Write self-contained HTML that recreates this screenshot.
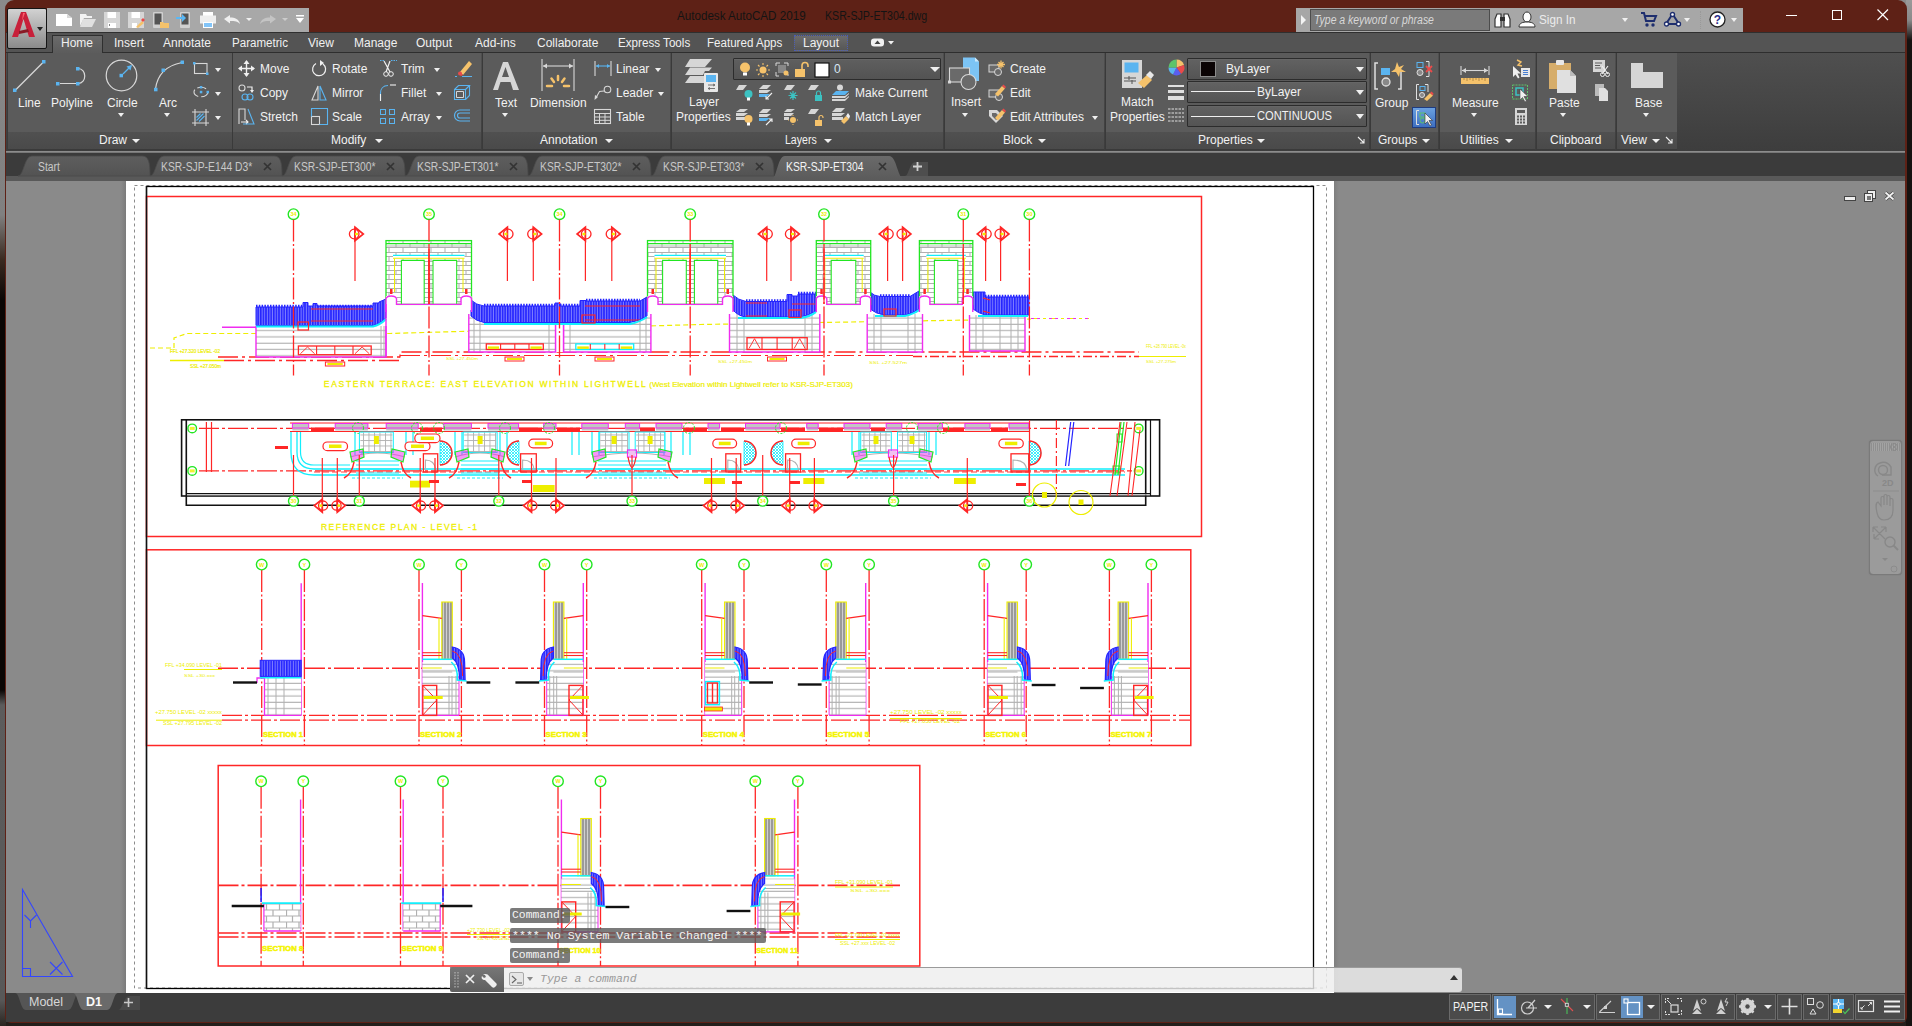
<!DOCTYPE html>
<html><head><meta charset="utf-8">
<style>
*{margin:0;padding:0;box-sizing:border-box}
html,body{width:1912px;height:1026px;overflow:hidden}
body{background:#241f1b;font-family:"Liberation Sans",sans-serif;position:relative}
.a{position:absolute}
svg{position:absolute;overflow:visible}
#desk{left:0;top:0;width:6px;height:1026px;background:linear-gradient(#8a8a8a 0px,#808080 215px,#3a2a20 260px,#0a0604 300px,#0a0604 690px,#5c5c5c 705px,#585858 1000px,#2a2520 1026px)}
#deskr{left:1906px;top:0;width:6px;height:1026px;background:linear-gradient(#9a9a9a 0px,#8a8a8a 20px,#161210 40px,#161210 1026px)}
#win{left:5px;top:0;width:1902px;height:1023px;background:#5e2116;border-radius:9px 9px 6px 6px}
#title{left:0;top:0;width:1912px;height:32px}
#tabrow{left:6px;top:32px;width:1899px;height:21px;background:#545454;border-top:1px solid #2f2f2f;border-bottom:1px solid #2e2e2e}
#ribbon{left:6px;top:53px;width:1899px;height:98px;background:linear-gradient(#4f4f4f,#3d3d3d)}
#ftabs{left:6px;top:152px;width:1899px;height:29px;background:#3b3b3b;border-top:1px solid #777}
#draw{left:6px;top:181px;width:1899px;height:812px;background:#8a8a8a;overflow:hidden}
#status{left:6px;top:993px;width:1899px;height:29px;background:#3c3c3c}
.t{color:#f2f2f2;font-size:12px;white-space:nowrap;position:absolute;line-height:14px}
.tab{color:#f0f0f0;font-size:12px;position:absolute;top:36px;line-height:14px;white-space:nowrap}
.pan{position:absolute;top:53px;height:97px;background:#5b5b5b;border-left:1px solid #3a3a3a;border-bottom:1px solid #3a3a3a}
.lbl{position:absolute;left:0;right:0;top:79px;height:17px;background:linear-gradient(#505050,#4a4a4a)}
.dd{position:absolute;width:0;height:0;border-left:4px solid transparent;border-right:4px solid transparent;border-top:4px solid #f0f0f0}
.ft{position:absolute;top:155px;height:22px;background:#575757;border-radius:9px 9px 0 0}
.ftt{position:absolute;top:160px;color:#c8c8c8;font-size:12px;line-height:14px;white-space:nowrap;transform-origin:0 0;transform:scaleX(.86)}
.fx{position:absolute;top:160px;color:#9a9a9a;font-size:12px;font-weight:bold;line-height:14px}
.cmb{position:absolute;background:#595959;border:1px solid #3a3a3a;border-radius:1px;box-shadow:inset 0 1px 0 #666}
.sg{position:absolute;top:994px;height:26px;background:#4b4b4b;border:1px solid #6a6a6a}
</style></head><body>
<div class="a" style="left:0;top:0;width:1912px;height:14px;background:#8a8a8a"></div><div class="a" id="desk"></div><div class="a" id="deskr"></div>
<div class="a" id="win"></div>
<!-- TITLE BAR -->
<div class="a" id="title" style="z-index:5">
  <!-- app button -->
  <div class="a" style="left:7px;top:8px;width:40px;height:41px;background:linear-gradient(#d2d2d2,#8a8a8a);border:1px solid #141414;border-radius:2px"></div>
  <svg style="left:11px;top:11px" width="30" height="28" viewBox="0 0 30 28">
    <path d="M1 26 L10 1 L15 1 L24 26 L18 26 L12.5 8 L7 26 Z" fill="#c8203a"/>
    <path d="M8 20 L17 18 L18 21 L8 23Z" fill="#8a1a26"/>
    <path d="M12 2 L14 2 L11 10Z" fill="#ff5a6a"/>
  </svg>
  <div class="dd" style="left:37px;top:27px;border-top-color:#222;border-left-width:3px;border-right-width:3px"></div>
  <!-- QAT -->
  <div class="a" style="left:47px;top:8px;width:262px;height:24px;background:#a8a8a8"></div>
  <svg style="left:56px;top:14px" width="17" height="13"><path d="M0 0H11L16 4V12H0Z" fill="#fff"/><path d="M11 0V4H16" fill="#d8d8d8"/></svg>
  <svg style="left:80px;top:14px" width="16" height="13"><path d="M0 0H6L7 2H12V4H4L0 12Z" fill="#f2f2f2"/><path d="M3 5H16L12 13H0Z" fill="#e0e0e0"/></svg>
  <svg style="left:104px;top:12px" width="16" height="16"><rect width="16" height="16" fill="#d6d6d6"/><rect x="3.5" y="0" width="8.5" height="6" fill="#fff"/><rect x="4" y="11" width="8" height="5" fill="#fff"/><rect x="5" y="12" width="1" height="2" fill="#888"/></svg>
  <svg style="left:128px;top:12px" width="16" height="16"><rect width="16" height="16" fill="#d6d6d6"/><rect x="3.5" y="0" width="8.5" height="6" fill="#fff"/><rect x="4" y="11" width="5" height="5" fill="#fff"/><path d="M8 15L14 9L16 11L10 16Z" fill="#f5c26b"/><path d="M13 8L15 6L17 8L15 10Z" fill="#e94a4a"/></svg>
  <svg style="left:153px;top:12px" width="16" height="16"><rect x="0" y="0" width="10" height="16" rx="1" fill="#d0d0d0"/><rect x="1.5" y="1.5" width="7" height="11" fill="#555"/><path d="M7 10H10L11 11H16V16H7Z" fill="#f5c26b"/></svg>
  <svg style="left:176px;top:12px" width="16" height="16"><rect x="4" y="0" width="10" height="16" rx="1" fill="#d0d0d0"/><rect x="5.5" y="1.5" width="7" height="11" fill="#555"/><path d="M0 5H6V2L10 6L6 10V7H0Z" fill="#5ab8f5"/></svg>
  <svg style="left:200px;top:12px" width="16" height="16"><rect x="3" y="0" width="10" height="5" fill="#fff"/><rect x="0" y="3.5" width="16" height="8" fill="#eee"/><rect x="3" y="10" width="10" height="6" fill="#fff"/><rect x="4" y="11" width="8" height="4" fill="#82c4f8"/></svg>
  <svg style="left:224px;top:15px" width="17" height="10"><path d="M0 4L6 0V2.5C11 2.5 15 4 16 9C14 6.5 11 6 6 6V8.5Z" fill="#efefef"/></svg>
  <div class="dd" style="left:246px;top:18px;border-left-width:3px;border-right-width:3px;border-top-width:3px"></div>
  <svg style="left:260px;top:15px" width="17" height="10"><path d="M16 4L10 0V2.5C5 2.5 1 4 0 9C2 6.5 5 6 10 6V8.5Z" fill="#c4c4c4"/></svg>
  <div class="dd" style="left:282px;top:18px;border-left-width:3px;border-right-width:3px;border-top-width:3px;border-top-color:#ccc"></div>
  <svg style="left:296px;top:15px" width="9" height="9"><rect width="8" height="1.5" fill="#fff"/><path d="M0 3H8L4 8Z" fill="#fff"/></svg>
  <!-- title -->
  <div class="t" style="left:677px;top:9px;color:#141414;font-size:12.5px;transform-origin:0 0;transform:scaleX(.93)">Autodesk AutoCAD 2019</div>
  <div class="t" style="left:825px;top:9px;color:#141414;font-size:12.5px;transform-origin:0 0;transform:scaleX(.85)">KSR-SJP-ET304.dwg</div>
  <!-- search -->
  <div class="a" style="left:1296px;top:8px;width:447px;height:24px;background:#a7a7a7"></div>
  <svg style="left:1301px;top:15px" width="6" height="10"><path d="M0 0L5 5L0 10Z" fill="#f4f4f4"/></svg>
  <div class="a" style="left:1310px;top:9px;width:180px;height:22px;background:#7a7a7a;border:1px solid #4c4c4c"></div>
  <div class="t" style="left:1314px;top:13px;color:#d8d8d8;font-style:italic;transform-origin:0 0;transform:scaleX(.87)">Type a keyword or phrase</div>
  <svg style="left:1494px;top:12px" width="17" height="16"><path d="M1 7L3 2H7V15H1Z M10 2H14L16 7V15H10Z" fill="#fff" stroke="#333" stroke-width="1.2"/><rect x="6" y="5" width="5" height="4" fill="#333"/></svg>
  <svg style="left:1518px;top:11px" width="18" height="17"><ellipse cx="9" cy="6" rx="4" ry="5" fill="#fff" stroke="#333"/><path d="M1 16C1 12 5 11 9 11C13 11 17 12 17 16Z" fill="#fff" stroke="#333"/></svg>
  <div class="t" style="left:1539px;top:13px;color:#ececec;font-size:13px;transform-origin:0 0;transform:scaleX(.9)">Sign In</div>
  <div class="dd" style="left:1622px;top:18px;border-left-width:3.5px;border-right-width:3.5px"></div>
  <svg style="left:1640px;top:12px" width="17" height="15"><path d="M1 1H4L6 9H14L16 4H5" fill="none" stroke="#1e2e6e" stroke-width="2"/><circle cx="7" cy="13" r="1.7" fill="#1e2e6e"/><circle cx="13" cy="13" r="1.7" fill="#1e2e6e"/></svg>
  <svg style="left:1664px;top:12px" width="17" height="15"><path d="M8.5 2L15 12H2Z" fill="none" stroke="#1e2e6e" stroke-width="2"/><circle cx="8.5" cy="2.5" r="2" fill="#fff" stroke="#1e2e6e" stroke-width="1.4"/><circle cx="2.5" cy="12" r="2" fill="#fff" stroke="#1e2e6e" stroke-width="1.4"/><circle cx="14.5" cy="12" r="2" fill="#fff" stroke="#1e2e6e" stroke-width="1.4"/></svg>
  <div class="dd" style="left:1684px;top:18px;border-left-width:3.5px;border-right-width:3.5px"></div>
  <div class="a" style="left:1700px;top:11px;width:1px;height:18px;border-left:1px dotted #999"></div>
  <svg style="left:1709px;top:11px" width="17" height="17"><circle cx="8.5" cy="8.5" r="7.5" fill="#fff" stroke="#222" stroke-width="1.3"/><text x="8.5" y="13" text-anchor="middle" font-family="Liberation Sans" font-weight="bold" font-size="12" fill="#2a2e8a">?</text></svg>
  <div class="dd" style="left:1731px;top:18px;border-left-width:3.5px;border-right-width:3.5px"></div>
  <!-- window controls -->
  <div class="a" style="left:1786px;top:15px;width:11px;height:1px;background:#fff"></div>
  <div class="a" style="left:1832px;top:10px;width:10px;height:10px;border:1px solid #fff"></div>
  <svg style="left:1877px;top:9px" width="12" height="12"><path d="M0.5 0.5L11 11M11 0.5L0.5 11" stroke="#fff" stroke-width="1.2"/></svg>
</div>
<!-- TAB ROW -->
<div class="a" id="tabrow"></div>
<div class="a" style="left:47px;top:32px;width:262px;height:1px;background:#2f2f2f"></div>
<div class="a" style="left:52px;top:35px;width:51px;height:19px;background:linear-gradient(#6a6a6a,#5b5b5b);border:1px solid #2f2f2f;border-bottom:none"></div>
<div class="tab" style="left:61px">Home</div>
<div class="tab" style="left:114px">Insert</div>
<div class="tab" style="left:163px">Annotate</div>
<div class="tab" style="left:232px;transform-origin:0 0;transform:scaleX(.965)">Parametric</div>
<div class="tab" style="left:308px">View</div>
<div class="tab" style="left:354px">Manage</div>
<div class="tab" style="left:416px">Output</div>
<div class="tab" style="left:475px">Add-ins</div>
<div class="tab" style="left:537px">Collaborate</div>
<div class="tab" style="left:618px;transform-origin:0 0;transform:scaleX(.97)">Express Tools</div>
<div class="tab" style="left:707px;transform-origin:0 0;transform:scaleX(.965)">Featured Apps</div>
<div class="a" style="left:794px;top:35px;width:54px;height:16px;border:1px dotted #4b5cb4;background:linear-gradient(#6c6c6c,#565656)"></div>
<div class="tab" style="left:803px">Layout</div>
<svg style="left:871px;top:38px" width="24" height="10"><rect x="0" y="0.5" width="13" height="8" rx="3" fill="#f0f0f0"/><path d="M3.5 6L6.5 2.5L9.5 6Z" fill="#444"/><path d="M17 3H23L20 6.5Z" fill="#f0f0f0"/></svg>
<!-- RIBBON -->
<div class="a" id="ribbon"></div>
<div class="a" style="left:6px;top:151px;width:1899px;height:1px;background:#8c8c8c"></div>
<!-- PANELS -->
<div class="pan" style="left:7px;width:225px"><div class="lbl"></div></div>
<div class="pan" style="left:232px;width:249px"><div class="lbl"></div></div>
<div class="pan" style="left:482px;width:188px"><div class="lbl"></div></div>
<div class="pan" style="left:671px;width:272px"><div class="lbl"></div></div>
<div class="pan" style="left:944px;width:160px"><div class="lbl"></div></div>
<div class="pan" style="left:1105px;width:264px"><div class="lbl"></div></div>
<div class="pan" style="left:1370px;width:68px"><div class="lbl"></div></div>
<div class="pan" style="left:1439px;width:96px"><div class="lbl"></div></div>
<div class="pan" style="left:1536px;width:79px"><div class="lbl"></div></div>
<div class="pan" style="left:1616px;width:61px"><div class="lbl"></div></div>
<!-- DRAW -->
<svg style="left:12px;top:59px" width="34" height="34"><path d="M3.5 31L31 3.5" stroke="#d8d8d8" stroke-width="1.2"/><rect x="1" y="29.5" width="3.5" height="3.5" fill="#5ab4f0"/><rect x="30" y="1" width="3.5" height="3.5" fill="#5ab4f0"/></svg>
<div class="t" style="left:18px;top:96px">Line</div>
<svg style="left:54px;top:65px" width="36" height="22"><path d="M6 18.5H22M24 3.5C33 3.5 33 18.5 24 18.5" fill="none" stroke="#d8d8d8" stroke-width="1.2"/><rect x="2" y="17" width="3.5" height="3.5" fill="#5ab4f0"/><rect x="22" y="17" width="3.5" height="3.5" fill="#5ab4f0"/><rect x="22" y="2" width="3.5" height="3.5" fill="#5ab4f0"/></svg>
<div class="t" style="left:51px;top:96px">Polyline</div>
<svg style="left:104px;top:58px" width="36" height="36"><circle cx="17.5" cy="17.5" r="15.3" fill="none" stroke="#d8d8d8" stroke-width="1.2"/><path d="M19 16L27 8" stroke="#5ab4f0" stroke-width="1.3"/><path d="M28 7L22.5 8.5L26.5 12.5Z" fill="#5ab4f0"/><rect x="15.5" y="15.8" width="3.5" height="3.5" fill="#5ab4f0"/></svg>
<div class="t" style="left:107px;top:96px">Circle</div>
<div class="dd" style="left:118px;top:113px;border-left-width:3.5px;border-right-width:3.5px"></div>
<svg style="left:152px;top:59px" width="34" height="34"><path d="M3.5 30C5 18 12 7 30 3.5" fill="none" stroke="#d8d8d8" stroke-width="1.2"/><rect x="2" y="28.8" width="3.5" height="3.5" fill="#5ab4f0"/><rect x="9.5" y="9.5" width="3.5" height="3.5" fill="#5ab4f0"/><rect x="28.5" y="1.5" width="3.5" height="3.5" fill="#5ab4f0"/></svg>
<div class="t" style="left:159px;top:96px">Arc</div>
<div class="dd" style="left:164px;top:113px;border-left-width:3.5px;border-right-width:3.5px"></div>
<svg style="left:193px;top:62px" width="16" height="14"><rect x="1.5" y="1.5" width="12.5" height="10" fill="none" stroke="#d8d8d8" stroke-width="1.1"/><rect x="0" y="0" width="2.5" height="2.5" fill="#5ab4f0"/><rect x="13" y="10.5" width="2.5" height="2.5" fill="#5ab4f0"/></svg>
<div class="dd" style="left:215px;top:68px;border-left-width:3.5px;border-right-width:3.5px"></div>
<svg style="left:193px;top:86px" width="16" height="12"><ellipse cx="8" cy="6" rx="7" ry="4.8" fill="none" stroke="#d8d8d8" stroke-width="1.1" stroke-dasharray="9 3"/><rect x="6.8" y="4.8" width="2.5" height="2.5" fill="#5ab4f0"/><rect x="6.8" y="0" width="2.5" height="2.5" fill="#5ab4f0"/><rect x="13.5" y="4.8" width="2.5" height="2.5" fill="#5ab4f0"/></svg>
<div class="dd" style="left:215px;top:92px;border-left-width:3.5px;border-right-width:3.5px"></div>
<svg style="left:192px;top:109px" width="18" height="17"><path d="M0 3H17M0 14H17M3 0V17M14 0V17" stroke="#d8d8d8" stroke-width="1.1"/><path d="M4.5 11.5L11.5 4.5M7 12.5L12.5 7M4.5 8.5L8.5 4.5" stroke="#5ab4f0" stroke-width="1.1"/></svg>
<div class="dd" style="left:215px;top:116px;border-left-width:3.5px;border-right-width:3.5px"></div>
<div class="t" style="left:99px;top:133px">Draw</div>
<div class="dd" style="left:132px;top:139px"></div>
<!-- MODIFY -->
<svg style="left:238px;top:60px" width="17" height="17"><path d="M8.5 1V16M1 8.5H16" stroke="#f0f0f0" stroke-width="1.4"/><path d="M8.5 0L5.5 4H11.5ZM8.5 17L5.5 13H11.5ZM0 8.5L4 5.5V11.5ZM17 8.5L13 5.5V11.5Z" fill="#f0f0f0"/></svg>
<div class="t" style="left:260px;top:62px">Move</div>
<svg style="left:238px;top:84px" width="17" height="17"><circle cx="4" cy="4" r="3" fill="none" stroke="#d8d8d8" stroke-width="1.1"/><path d="M9 3H14V7" fill="none" stroke="#f0f0f0" stroke-width="1.2"/><path d="M12 6H16L14 9Z" fill="#f0f0f0"/><circle cx="7" cy="13" r="3" fill="none" stroke="#5ab4f0" stroke-width="1.1"/><circle cx="12" cy="13" r="3" fill="none" stroke="#5ab4f0" stroke-width="1.1"/></svg>
<div class="t" style="left:260px;top:86px">Copy</div>
<svg style="left:238px;top:108px" width="17" height="17"><path d="M1 16V1H7V12" fill="none" stroke="#d8d8d8" stroke-width="1.1"/><path d="M3 14H10M8 12L10 14L8 16" fill="none" stroke="#f0f0f0" stroke-width="1.1"/><path d="M10 1L16 16H5" fill="none" stroke="#5ab4f0" stroke-width="1.1"/></svg>
<div class="t" style="left:260px;top:110px">Stretch</div>
<svg style="left:311px;top:60px" width="16" height="17"><path d="M12 4A6.5 6.5 0 1 1 5 3.5" fill="none" stroke="#f0f0f0" stroke-width="1.2"/><path d="M9 0L13 3L9 6Z" fill="#f0f0f0"/></svg>
<div class="t" style="left:332px;top:62px">Rotate</div>
<svg style="left:311px;top:85px" width="16" height="16"><path d="M7 1L1 15H7Z" fill="none" stroke="#d8d8d8" stroke-width="1.1"/><path d="M9 1L15 15H9Z" fill="none" stroke="#5ab4f0" stroke-width="1.1"/></svg>
<div class="t" style="left:332px;top:86px">Mirror</div>
<svg style="left:311px;top:108px" width="17" height="17"><rect x="0.5" y="8.5" width="8" height="8" fill="none" stroke="#d8d8d8" stroke-width="1.1"/><path d="M0.5 8.5V0.5H16.5V16.5H8.5" fill="none" stroke="#5ab4f0" stroke-width="1.1"/></svg>
<div class="t" style="left:332px;top:110px">Scale</div>
<svg style="left:380px;top:60px" width="17" height="17"><path d="M0 0.5H5M11 0.5H17" stroke="#5ab4f0" stroke-width="1" stroke-dasharray="1.5 1"/><path d="M4 1L10 12M10 1L6 12" stroke="#f0f0f0" stroke-width="1.2"/><circle cx="6" cy="14" r="2.3" fill="none" stroke="#f0f0f0"/><circle cx="11" cy="14" r="2.3" fill="none" stroke="#f0f0f0"/></svg>
<div class="t" style="left:401px;top:62px">Trim</div>
<div class="dd" style="left:434px;top:68px;border-left-width:3.5px;border-right-width:3.5px"></div>
<svg style="left:380px;top:84px" width="17" height="17"><path d="M0.5 16V9C0.5 5 3 1.5 8 1.5" fill="none" stroke="#5ab4f0" stroke-width="1.1"/><path d="M0.5 10V17" stroke="#f0f0f0" stroke-width="1.1"/><path d="M10 1H16" stroke="#f0f0f0" stroke-width="1.1"/></svg>
<div class="t" style="left:401px;top:86px">Fillet</div>
<div class="dd" style="left:436px;top:92px;border-left-width:3.5px;border-right-width:3.5px"></div>
<svg style="left:380px;top:109px" width="15" height="15"><rect x="0.5" y="0.5" width="5" height="5" fill="none" stroke="#5ab4f0"/><rect x="9.5" y="0.5" width="5" height="5" fill="none" stroke="#5ab4f0"/><rect x="0.5" y="9.5" width="5" height="5" fill="none" stroke="#5ab4f0"/><rect x="9.5" y="9.5" width="5" height="5" fill="none" stroke="#5ab4f0"/></svg>
<div class="t" style="left:401px;top:110px">Array</div>
<div class="dd" style="left:436px;top:116px;border-left-width:3.5px;border-right-width:3.5px"></div>
<svg style="left:455px;top:60px" width="17" height="17"><path d="M5 12L14 1L17 4L8 15Z" fill="#f5c26b"/><path d="M5 12L8 15L6 16L4 14Z" fill="#e94a4a"/><circle cx="5" cy="13.5" r="2" fill="#e94a4a"/><path d="M0 16.5H2M7 16.5H17" stroke="#5ab4f0"/></svg>
<svg style="left:454px;top:85px" width="17" height="15"><path d="M0.5 4.5H11.5V14.5H0.5Z M0.5 4.5L4.5 0.5H15.5L11.5 4.5M15.5 0.5V10.5L11.5 14.5" fill="none" stroke="#5ab4f0" stroke-width="1.1"/><path d="M2.5 6.5H9.5V12.5H2.5Z" fill="none" stroke="#d8d8d8"/></svg>
<svg style="left:454px;top:109px" width="17" height="13"><path d="M16 1H6A5.5 5.5 0 0 0 6 12H16M16 4H6A2.5 2.5 0 0 0 6 9H16" fill="none" stroke="#5ab4f0" stroke-width="1.2"/></svg>
<div class="t" style="left:331px;top:133px">Modify</div>
<div class="dd" style="left:375px;top:139px"></div>
<!-- ANNOTATION -->
<svg style="left:492px;top:61px" width="28" height="30"><path d="M1 29L11 1H16L27 29H21L18.5 21H8.5L6 29Z M10 16H17L13.5 6Z" fill="#d6d6d6"/></svg>
<div class="t" style="left:495px;top:96px">Text</div>
<div class="dd" style="left:502px;top:113px;border-left-width:3.5px;border-right-width:3.5px"></div>
<svg style="left:541px;top:59px" width="34" height="34"><path d="M1 0V32M33 0V32" stroke="#d8d8d8" stroke-width="1.1"/><path d="M2 7H32" stroke="#d8d8d8" stroke-width="1.1"/><path d="M2 7L6 4.5V9.5ZM32 7L28 4.5V9.5Z" fill="#d8d8d8"/><path d="M17 17V21M10.5 19.5L13 23M23.5 19.5L21 23M6 27H11M23 27H28" stroke="#f5c26b" stroke-width="2.5" stroke-linecap="round"/></svg>
<div class="t" style="left:530px;top:96px">Dimension</div>
<svg style="left:594px;top:61px" width="18" height="16"><path d="M1 0V15M17 0V15" stroke="#d8d8d8" stroke-width="1.1"/><path d="M2 5H16" stroke="#5ab4f0" stroke-width="1.1"/><path d="M2 5L5 3V7ZM16 5L13 3V7Z" fill="#5ab4f0"/></svg>
<div class="t" style="left:616px;top:62px">Linear</div>
<div class="dd" style="left:655px;top:68px;border-left-width:3.5px;border-right-width:3.5px"></div>
<svg style="left:594px;top:85px" width="18" height="15"><circle cx="13.5" cy="4.5" r="3.3" fill="none" stroke="#d8d8d8" stroke-width="1.1"/><path d="M10 6L5.5 6.5L1.5 13.5" fill="none" stroke="#d8d8d8" stroke-width="1.1"/><path d="M0.5 15L1 10L4 12Z" fill="#d8d8d8"/></svg>
<div class="t" style="left:616px;top:86px">Leader</div>
<div class="dd" style="left:658px;top:92px;border-left-width:3.5px;border-right-width:3.5px"></div>
<svg style="left:594px;top:109px" width="17" height="15"><rect x="0.5" y="0.5" width="16" height="14" fill="none" stroke="#d8d8d8" stroke-width="1.1"/><path d="M0.5 4.5H16.5M0.5 8H16.5M0.5 11.3H16.5M5.5 4.5V14.5M11 4.5V14.5" stroke="#d8d8d8" stroke-width="1"/></svg>
<div class="t" style="left:616px;top:110px">Table</div>
<div class="t" style="left:540px;top:133px">Annotation</div>
<div class="dd" style="left:605px;top:139px"></div>
<!-- LAYERS -->
<svg style="left:685px;top:59px" width="34" height="33"><path d="M5 0H27L20 8H0Z" fill="#d6d6d6"/><path d="M5 8.5H27L24 12H20L18 16H0Z" fill="#d6d6d6"/><path d="M5 17H19V24H0Z" fill="#d6d6d6"/><rect x="19" y="14" width="14" height="19" rx="1" fill="#e8e8e8"/><rect x="21" y="16" width="10" height="7" fill="#5ab4f0"/><path d="M23 26H30M28 25L30 26L28 27M30 29.5H23M25 28.5L23 29.5L25 30.5" stroke="#666" stroke-width="0.9" fill="none"/></svg>
<div class="t" style="left:689px;top:95px">Layer</div>
<div class="t" style="left:676px;top:110px">Properties</div>
<div class="cmb" style="left:733px;top:58px;width:208px;height:22px;background:linear-gradient(#5f5f5f,#535353);border-color:#2c2c2c"></div>
<svg style="left:739px;top:62px" width="92" height="16"><circle cx="6" cy="5.5" r="5" fill="#f5c26b"/><rect x="4" y="10.5" width="4" height="3" fill="#fff"/>
<circle cx="24" cy="8" r="3.5" fill="#f5c26b"/><path d="M24 1V3M24 13V15M17 8H19M29 8H31M19 3L20.5 4.5M29 3L27.5 4.5M19 13L20.5 11.5M29 13L27.5 11.5" stroke="#f5c26b" stroke-width="1.1"/>
<path d="M37 4V1H41M45 1H49V4M37 10V14H40M49 12V14" fill="none" stroke="#d8d8d8" stroke-width="1"/><rect x="39" y="3" width="8" height="8" fill="#888"/><circle cx="47" cy="11" r="2.5" fill="#f5c26b"/>
<rect x="56" y="7" width="10" height="8" fill="#f5c26b"/><path d="M63 7V3.5A3 3 0 0 1 69 3.5V5" fill="none" stroke="#f5c26b" stroke-width="1.6"/>
<rect x="76" y="1" width="14" height="14" fill="#fff" stroke="#111" stroke-width="1.2"/></svg>
<div class="t" style="left:834px;top:62px;color:#d8e6f4">0</div>
<div class="dd" style="left:930px;top:67px;border-left-width:5px;border-right-width:5px;border-top-width:5px"></div>
<svg style="left:736px;top:85px" width="92" height="16"><path d="M3 0H11L7 5H0Z" fill="#d6d6d6"/><circle cx="12.5" cy="9" r="4" fill="#3cc2c2"/><rect x="11" y="12.5" width="3" height="3" fill="#fff"/>
<path d="M27 0H35L31 4H23Z M23 5H35L31 8H23Z" fill="#d6d6d6"/><path d="M23 9H34L30 12H23Z" fill="#5ab4f0"/><path d="M36 8L30 14M30 11V14H33" fill="none" stroke="#f0f0f0" stroke-width="1.1"/>
<path d="M51 0H59L55 5H48Z" fill="#d6d6d6"/><path d="M57 6V15M52.5 10.5H61.5M54 7.5L60 13.5M60 7.5L54 13.5" stroke="#3cc2c2" stroke-width="1.2"/>
<path d="M75 0H83L79 5H72Z" fill="#d6d6d6"/><rect x="79" y="10" width="7" height="6" fill="#3cc2c2"/><path d="M80.5 10V8A2 2 0 0 1 84.5 8V10" fill="none" stroke="#3cc2c2" stroke-width="1.2"/></svg>
<svg style="left:832px;top:84px" width="18" height="18"><circle cx="8" cy="3.5" r="3" fill="#d8d8d8"/><path d="M4 7H17L13 11H0Z" fill="#5ab4f0"/><path d="M0 12H13L17 9V10L13 14H0Z M0 15H13L17 12V13L13 17H0Z" fill="#d6d6d6"/></svg>
<div class="t" style="left:855px;top:86px">Make Current</div>
<svg style="left:736px;top:109px" width="92" height="17"><path d="M4 0H12L8 3H0Z M0 4H12L8 7H0Z M0 8H9V11H0Z" fill="#d6d6d6"/><circle cx="12.5" cy="10" r="4" fill="#f5c26b"/><rect x="11" y="13.5" width="3" height="3" fill="#fff"/>
<path d="M27 0H35L31 4H23Z M23 5H35L31 8H23Z" fill="#d6d6d6"/><path d="M23 9H34L30 12H23Z" fill="#5ab4f0"/><path d="M30 16L36 10M33 10H36V13" fill="none" stroke="#f0f0f0" stroke-width="1.1"/>
<path d="M51 0H59L55 3H48Z M48 4H58L55 7H48Z M48 8H53V11H48Z" fill="#d6d6d6"/><circle cx="57" cy="11" r="3" fill="#f5c26b"/><path d="M57 6V7M57 15V16M52 11H53M61 11H62" stroke="#f5c26b"/>
<path d="M75 0H83L79 5H72Z" fill="#d6d6d6"/><rect x="79" y="11" width="7" height="6" fill="#f5c26b"/><path d="M83 11V8.5A2 2 0 0 1 87 8.5V9" fill="none" stroke="#f5c26b" stroke-width="1.2"/></svg>
<svg style="left:832px;top:108px" width="18" height="18"><path d="M4 0H13L9 4H0Z M0 5H13L9 8H0Z M0 9H11V12H0Z" fill="#d6d6d6"/><path d="M9 13L14 8L17 11L12 16Z" fill="#f5c26b"/><path d="M14 8L16 5L18 8L17 11Z" fill="#f0f0f0"/></svg>
<div class="t" style="left:855px;top:110px">Match Layer</div>
<div class="t" style="left:785px;top:133px;transform-origin:0 0;transform:scaleX(.88)">Layers</div>
<div class="dd" style="left:824px;top:139px"></div>
<!-- BLOCK -->
<svg style="left:948px;top:57px" width="35" height="34"><path d="M15 0.5H27L31 4.5V24H15Z" fill="#7cc4f5"/><path d="M27 0.5L31 4.5H27Z" fill="#cde9fb"/><rect x="1.5" y="11" width="20" height="14" fill="#6a6a6a" stroke="#d8d8d8" stroke-width="1.1"/><circle cx="20.5" cy="25" r="7.5" fill="#6a6a6a" stroke="#d8d8d8" stroke-width="1.1"/><rect x="0" y="23.5" width="3" height="3" fill="#d8d8d8"/></svg>
<div class="t" style="left:951px;top:95px">Insert</div>
<div class="dd" style="left:962px;top:113px;border-left-width:3.5px;border-right-width:3.5px"></div>
<svg style="left:988px;top:60px" width="18" height="17"><rect x="1" y="5" width="10" height="7" fill="#6a6a6a" stroke="#d8d8d8"/><circle cx="10" cy="12" r="3.5" fill="#6a6a6a" stroke="#d8d8d8"/><path d="M13 0.5V8.5M9 4.5H17M10.5 2L15.5 7M15.5 2L10.5 7" stroke="#f5c26b" stroke-width="1.3"/></svg>
<div class="t" style="left:1010px;top:62px">Create</div>
<svg style="left:988px;top:84px" width="18" height="17"><rect x="1" y="6" width="10" height="7" fill="#6a6a6a" stroke="#d8d8d8"/><circle cx="11" cy="13" r="3.5" fill="#6a6a6a" stroke="#d8d8d8"/><path d="M7 10L14 2L17 4.5L10 12.5Z" fill="#f5c26b"/><path d="M14 2L15.5 0.5L18 3L17 4.5Z" fill="#e94a4a"/></svg>
<div class="t" style="left:1010px;top:86px">Edit</div>
<svg style="left:988px;top:108px" width="18" height="17"><path d="M1 2H9L15 8L8 15L1 8Z" fill="#d8d8d8"/><path d="M4 5H8L12 9L8 12L4 8Z" fill="#6a6a6a"/><path d="M7 10L14 2L17 4.5L10 12.5Z" fill="#f5c26b"/><path d="M14 2L15.5 0.5L18 3L17 4.5Z" fill="#e94a4a"/></svg>
<div class="t" style="left:1010px;top:110px">Edit Attributes</div>
<div class="dd" style="left:1092px;top:116px;border-left-width:3.5px;border-right-width:3.5px"></div>
<div class="t" style="left:1003px;top:133px">Block</div>
<div class="dd" style="left:1038px;top:139px"></div>
<!-- PROPERTIES -->
<svg style="left:1121px;top:59px" width="33" height="34"><rect x="1" y="1" width="20" height="28" fill="#d6d6d6"/><rect x="3.5" y="3.5" width="14" height="10" fill="#5ab4f0"/><path d="M3 19H15M3 22H15M8 17V21M11 21V25" stroke="#555" stroke-width="1"/><path d="M17 24L26 16L31 21L23 29Z" fill="#f5c26b"/><path d="M25 16L29 12L33 16L30 20Z" fill="#e8e8e8"/></svg>
<div class="t" style="left:1121px;top:95px">Match</div>
<div class="t" style="left:1110px;top:110px">Properties</div>
<svg style="left:1168px;top:59px" width="17" height="17"><path d="M8.5 8.5L8.5 0.5A8 8 0 0 1 16 6Z" fill="#f5c26b"/><path d="M8.5 8.5L16 6A8 8 0 0 1 13 15Z" fill="#e94a4a"/><path d="M8.5 8.5L13 15A8 8 0 0 1 5 15.5Z" fill="#5a5ef0"/><path d="M8.5 8.5L5 15.5A8 8 0 0 1 0.5 8.5Z" fill="#5ab4f0"/><path d="M8.5 8.5L0.5 8.5A8 8 0 0 1 8.5 0.5Z" fill="#5cc46a"/></svg>
<svg style="left:1168px;top:84px" width="17" height="17"><rect x="0" y="1" width="16" height="2" fill="#e0e0e0"/><rect x="0" y="6" width="16" height="3" fill="#e0e0e0"/><rect x="0" y="12" width="16" height="4" fill="#e0e0e0"/></svg>
<svg style="left:1168px;top:108px" width="17" height="14"><path d="M0 1H16M0 5H16M0 9H16M0 13H16" stroke="#e0e0e0" stroke-width="1.2" stroke-dasharray="2.5 1"/></svg>
<div class="cmb" style="left:1187px;top:58px;width:180px;height:22px;background:linear-gradient(#626262,#545454);border-color:#2c2c2c"></div>
<div class="a" style="left:1200px;top:61px;width:16px;height:16px;background:#0a0304;border:1px solid #8a8a8a"></div>
<div class="t" style="left:1226px;top:62px">ByLayer</div>
<div class="dd" style="left:1356px;top:67px;border-left-width:4.5px;border-right-width:4.5px;border-top-width:5px"></div>
<div class="cmb" style="left:1187px;top:81px;width:180px;height:22px;background:linear-gradient(#626262,#545454);border-color:#2c2c2c"></div>
<div class="a" style="left:1191px;top:91px;width:64px;height:1px;background:#f0f0f0"></div>
<div class="t" style="left:1257px;top:85px">ByLayer</div>
<div class="dd" style="left:1356px;top:90px;border-left-width:4.5px;border-right-width:4.5px;border-top-width:5px"></div>
<div class="cmb" style="left:1187px;top:105px;width:180px;height:22px;background:linear-gradient(#626262,#545454);border-color:#2c2c2c"></div>
<div class="a" style="left:1191px;top:116px;width:64px;height:1px;background:#f0f0f0"></div>
<div class="t" style="left:1257px;top:109px;transform-origin:0 0;transform:scaleX(.93)">CONTINUOUS</div>
<div class="dd" style="left:1356px;top:114px;border-left-width:4.5px;border-right-width:4.5px;border-top-width:5px"></div>
<div class="t" style="left:1198px;top:133px">Properties</div>
<div class="dd" style="left:1257px;top:139px"></div>
<svg style="left:1357px;top:136px" width="8" height="8"><path d="M1 1L7 7M7 3V7H3" fill="none" stroke="#f0f0f0" stroke-width="1.1"/></svg>
<!-- GROUPS -->
<svg style="left:1374px;top:60px" width="33" height="32"><path d="M4 3H1V29H4M27 12V29H24" fill="none" stroke="#e0e0e0" stroke-width="1.5"/><rect x="7" y="8" width="9" height="7" fill="#5ab4f0"/><circle cx="12" cy="22" r="4" fill="#888" stroke="#e0e0e0" stroke-width="1.3"/><path d="M23 2L25 7L30 5L27 9L32 12L26 12L25 17L22 12L17 12L21 9Z" fill="#f5c26b"/></svg>
<div class="t" style="left:1375px;top:96px">Group</div>
<svg style="left:1416px;top:61px" width="17" height="16"><path d="M10 0.5H13V15.5H10" fill="none" stroke="#e0e0e0"/><rect x="1" y="1.5" width="6" height="5" fill="none" stroke="#5ab4f0"/><circle cx="4" cy="11.5" r="3" fill="#888" stroke="#e0e0e0"/><path d="M10 5L16 11M16 5L10 11" stroke="#e94a4a" stroke-width="1.8"/></svg>
<svg style="left:1416px;top:84px" width="17" height="17"><path d="M3 0.5H0.5V15.5H3M9 0.5H12V8" fill="none" stroke="#e0e0e0"/><rect x="4" y="2.5" width="5" height="4" fill="none" stroke="#5ab4f0"/><circle cx="6" cy="11" r="2.5" fill="#888" stroke="#e0e0e0"/><path d="M8 15L14 9L17 11.5L11 17Z" fill="#f5c26b"/><path d="M14 9L15.5 7.5L17.5 9.5L17 11.5Z" fill="#e94a4a"/></svg>
<div class="a" style="left:1412px;top:107px;width:24px;height:21px;background:linear-gradient(#6aa0e0,#3e6fc0);border:1px solid #1f3c80"></div>
<svg style="left:1416px;top:110px" width="18" height="17"><path d="M3 0.5H0.5V14.5H3" fill="none" stroke="#e0e0e0"/><rect x="4" y="3" width="5" height="4" fill="none" stroke="#5cc46a"/><circle cx="6.5" cy="10.5" r="2.5" fill="none" stroke="#5cc46a"/><path d="M9 3L9 14L11.5 11.5L14 16L15.5 15L13 10.5H16.5Z" fill="#f0f0f0" stroke="#333" stroke-width="0.6"/></svg>
<div class="t" style="left:1378px;top:133px">Groups</div>
<div class="dd" style="left:1422px;top:139px"></div>
<!-- UTILITIES -->
<svg style="left:1460px;top:66px" width="30" height="19"><path d="M1 0V9M29 0V9" stroke="#d8d8d8" stroke-width="1.1"/><path d="M2 4.5H28" stroke="#d8d8d8" stroke-width="1.1"/><path d="M2 4.5L6 2V7ZM28 4.5L24 2V7Z" fill="#d8d8d8"/><rect x="1" y="12" width="28" height="6" fill="#f5c26b"/><path d="M4 12V14M7 12V15M10 12V14M13 12V15M16 12V14M19 12V15M22 12V14M25 12V15" stroke="#a57e3a" stroke-width="0.8"/></svg>
<div class="t" style="left:1452px;top:96px">Measure</div>
<div class="dd" style="left:1471px;top:113px;border-left-width:3.5px;border-right-width:3.5px"></div>
<svg style="left:1512px;top:60px" width="18" height="18"><path d="M1 6V17L3.5 14.5L6 18.5L7.5 17.5L5.5 13.5H9Z" fill="#f0f0f0"/><path d="M5 0L9 2L6 5L10 6" fill="none" stroke="#f5c26b" stroke-width="1.4"/><rect x="9" y="8" width="9" height="9" fill="#e8e8e8"/><path d="M11 10.5H16M11 12.5H16M11 14.5H16" stroke="#4a7fd0" stroke-width="1"/></svg>
<svg style="left:1512px;top:84px" width="18" height="18"><rect x="0.5" y="1" width="15" height="14" fill="none" stroke="#5cc46a" stroke-dasharray="2 1"/><path d="M4 4H11V11H4Z" fill="none" stroke="#3cc2c2" stroke-width="1.5"/><path d="M8 5V16L10.5 13.5L13 18L14.5 17L12 12.5H16Z" fill="#f0f0f0" stroke="#444" stroke-width="0.6"/></svg>
<svg style="left:1515px;top:108px" width="13" height="18"><rect x="0" y="0" width="12" height="17" fill="#d6d6d6"/><rect x="2" y="2" width="8" height="3" fill="#5b5b5b"/><path d="M2 7.5H4V9.5H2ZM5 7.5H7V9.5H5ZM8 7.5H10V9.5H8ZM2 10.5H4V12.5H2ZM5 10.5H7V12.5H5ZM8 10.5H10V12.5H8ZM2 13.5H4V15.5H2ZM5 13.5H7V15.5H5ZM8 13.5H10V15.5H8Z" fill="#5b5b5b"/></svg>
<div class="t" style="left:1460px;top:133px">Utilities</div>
<div class="dd" style="left:1505px;top:139px"></div>
<!-- CLIPBOARD -->
<svg style="left:1549px;top:59px" width="28" height="34"><rect x="0" y="4" width="22" height="26" fill="#d6ad6b"/><rect x="7" y="1" width="8" height="5" rx="1" fill="#e8e8e8"/><path d="M8 11H21L27 17V34H8Z" fill="#e0e0e0"/><path d="M21 11V17H27Z" fill="#bbb"/></svg>
<div class="t" style="left:1549px;top:96px">Paste</div>
<div class="dd" style="left:1560px;top:113px;border-left-width:3.5px;border-right-width:3.5px"></div>
<svg style="left:1593px;top:60px" width="17" height="17"><rect x="0" y="0" width="12" height="12" fill="#d6d6d6"/><path d="M2 3H9M2 5.5H7M2 8H8" stroke="#5b5b5b"/><path d="M9 6L15 14M15 6L9 14" stroke="#f0f0f0" stroke-width="1.1"/><circle cx="9.5" cy="14.5" r="2" fill="none" stroke="#f0f0f0"/><circle cx="14.5" cy="14.5" r="2" fill="none" stroke="#f0f0f0"/></svg>
<svg style="left:1595px;top:84px" width="14" height="17"><rect x="0" y="0" width="9" height="12" fill="#bbb"/><path d="M4 4H10L13 7V17H4Z" fill="#e0e0e0"/></svg>
<div class="t" style="left:1550px;top:133px">Clipboard</div>
<!-- VIEW -->
<svg style="left:1631px;top:63px" width="33" height="26"><path d="M0 0H12V9H32V25H0Z" fill="#d6d6d6"/></svg>
<div class="t" style="left:1635px;top:96px">Base</div>
<div class="dd" style="left:1643px;top:113px;border-left-width:3.5px;border-right-width:3.5px"></div>
<div class="t" style="left:1621px;top:133px">View</div>
<div class="dd" style="left:1652px;top:139px"></div>
<svg style="left:1665px;top:136px" width="8" height="8"><path d="M1 1L7 7M7 3V7H3" fill="none" stroke="#f0f0f0" stroke-width="1.1"/></svg>

<!-- FILE TABS -->
<div class="a" id="ftabs"></div>
<div class="a" style="left:6px;top:176px;width:1899px;height:5px;background:#595959"></div>
<svg style="left:6px;top:153px" width="940" height="28">
 <defs><linearGradient id="tg" x1="0" y1="0" x2="0" y2="1"><stop offset="0" stop-color="#5e5e5e"/><stop offset="1" stop-color="#535353"/></linearGradient>
 <linearGradient id="tga" x1="0" y1="0" x2="0" y2="1"><stop offset="0" stop-color="#6a6a6a"/><stop offset="1" stop-color="#5a5a5a"/></linearGradient></defs>
 <path d="M12 23 C18 23 18 3 26 3 H136 C143 3 144 10 144 23 Z" fill="url(#tg)" stroke="#4a4a4a" stroke-width="0.8"/>
 <path d="M144 23 C150 23 150 3 158 3 H268 C275 3 276 10 276 23 Z" fill="url(#tg)" stroke="#4a4a4a" stroke-width="0.8"/>
 <path d="M276 23 C282 23 282 3 290 3 H391 C398 3 399 10 399 23 Z" fill="url(#tg)" stroke="#4a4a4a" stroke-width="0.8"/>
 <path d="M399 23 C405 23 405 3 413 3 H514 C521 3 522 10 522 23 Z" fill="url(#tg)" stroke="#4a4a4a" stroke-width="0.8"/>
 <path d="M522 23 C528 23 528 3 536 3 H637 C644 3 645 10 645 23 Z" fill="url(#tg)" stroke="#4a4a4a" stroke-width="0.8"/>
 <path d="M645 23 C651 23 651 3 659 3 H760 C767 3 768 10 768 23 Z" fill="url(#tg)" stroke="#4a4a4a" stroke-width="0.8"/>
 <path d="M764 28 C771 28 771 3 779 3 H883 C891 3 891 25 899 28 Z" fill="url(#tga)"/>
 <path d="M899 23 C903 23 903 9 910 9 H922 L922 23 Z" fill="#4e4e4e"/>
</svg>
<div class="ftt" style="left:38px">Start</div>
<div class="ftt" style="left:161px">KSR-SJP-E144 D3*</div>
<div class="ftt" style="left:294px">KSR-SJP-ET300*</div>
<div class="ftt" style="left:417px">KSR-SJP-ET301*</div>
<div class="ftt" style="left:540px">KSR-SJP-ET302*</div>
<div class="ftt" style="left:663px">KSR-SJP-ET303*</div>
<div class="ftt" style="left:786px;color:#f4f4f4">KSR-SJP-ET304</div>
<svg style="left:263px;top:162px" width="9" height="9"><path d="M1 1L8 8M8 1L1 8" stroke="#333" stroke-width="1.7"/></svg>
<svg style="left:386px;top:162px" width="9" height="9"><path d="M1 1L8 8M8 1L1 8" stroke="#333" stroke-width="1.7"/></svg>
<svg style="left:509px;top:162px" width="9" height="9"><path d="M1 1L8 8M8 1L1 8" stroke="#333" stroke-width="1.7"/></svg>
<svg style="left:632px;top:162px" width="9" height="9"><path d="M1 1L8 8M8 1L1 8" stroke="#333" stroke-width="1.7"/></svg>
<svg style="left:755px;top:162px" width="9" height="9"><path d="M1 1L8 8M8 1L1 8" stroke="#333" stroke-width="1.7"/></svg>
<svg style="left:878px;top:162px" width="9" height="9"><path d="M1 1L8 8M8 1L1 8" stroke="#333" stroke-width="1.7"/></svg>
<svg style="left:912px;top:161px" width="11" height="11"><path d="M5.5 1V10M1 5.5H10" stroke="#d0d0d0" stroke-width="1.8"/></svg>

<!-- DRAW AREA -->
<div class="a" id="draw">
  <div class="a" style="left:115px;top:0;width:5px;height:812px;background:linear-gradient(90deg,#8a8a8a,#7b7b7b)"></div>
  <div class="a" style="left:120px;top:0;width:1208px;height:812px;background:#fff"></div>
  <div class="a" style="left:1328px;top:0;width:5px;height:812px;background:linear-gradient(90deg,#7f7f7f,#8a8a8a)"></div>
</div>
<svg id="paper" style="left:0;top:0" width="1912" height="1026">
  <rect x="134.5" y="185.5" width="1192" height="802.5" fill="none" stroke="#8c8c8c" stroke-width="1" stroke-dasharray="3 3"/>
  <rect x="146.5" y="186.5" width="1167" height="802" fill="none" stroke="#000" stroke-width="1.3"/>
</svg>

<!--DRAWING--><svg id="cad" style="left:0;top:0" width="1912" height="1026" font-family="Liberation Sans"><defs><pattern id="rail" width="2.6" height="10" patternUnits="userSpaceOnUse"><rect width="2.6" height="10" fill="#2424ff"/><rect x="1.6" width="0.9" height="10" fill="#8c8cff"/></pattern><pattern id="brick" width="26" height="12" patternUnits="userSpaceOnUse" x="0" y="903.5"><rect width="26" height="12" fill="#fff"/><path d="M0 0.5H26M0 6.5H26M6.5 0.5V6.5M19.5 0.5V6.5M0.5 6.5V12M13 6.5V12" stroke="#b0b0b0" stroke-width="1.2"/></pattern><pattern id="gbrick" width="14" height="9" patternUnits="userSpaceOnUse"><rect width="14" height="9" fill="#fff"/><path d="M0 0.5H14M0 4.5H14M4 0.5V4.5M11 4.5V9" stroke="#b0b0b0" stroke-width="1"/></pattern><pattern id="wall" width="5" height="6.3" patternUnits="userSpaceOnUse"><rect width="5" height="6.3" fill="#fff"/><path d="M0 3H5" stroke="#b0b0b0" stroke-width="1.1"/></pattern><pattern id="tile" width="5.5" height="5.5" patternUnits="userSpaceOnUse"><rect width="5.5" height="5.5" fill="#fff"/><path d="M0 0.5H5.5M0.5 0V5.5" stroke="#b0b0b0" stroke-width="0.9"/></pattern><pattern id="col" width="3" height="6" patternUnits="userSpaceOnUse"><rect width="3" height="6" fill="#9a9a9a"/><rect x="2" width="1" height="6" fill="#d0d0d0"/></pattern><pattern id="fan" width="3" height="3" patternUnits="userSpaceOnUse"><rect width="3" height="3" fill="#fff"/><path d="M0 0L3 3M3 0L0 3" stroke="#12eefc" stroke-width="0.8"/></pattern></defs><rect x="146.5" y="196.5" width="1055.0" height="340.0" fill="none" stroke="#ff2626" stroke-width="1.5"/><rect x="146.5" y="549.8" width="1044.3" height="195.7" fill="none" stroke="#ff2626" stroke-width="1.5"/><rect x="218.2" y="765.5" width="701.6" height="200.5" fill="none" stroke="#ff2626" stroke-width="1.5"/><circle cx="293.5" cy="214.2" r="5.3" fill="#fff" stroke="#22e622" stroke-width="1.4"/><text x="293.5" y="216.2" font-size="5.5" fill="#eeee00" text-anchor="middle" font-weight="bold">34</text><circle cx="429.0" cy="214.2" r="5.3" fill="#fff" stroke="#22e622" stroke-width="1.4"/><text x="429.0" y="216.2" font-size="5.5" fill="#eeee00" text-anchor="middle" font-weight="bold">35</text><circle cx="559.5" cy="214.2" r="5.3" fill="#fff" stroke="#22e622" stroke-width="1.4"/><text x="559.5" y="216.2" font-size="5.5" fill="#eeee00" text-anchor="middle" font-weight="bold">34</text><circle cx="690.2" cy="214.2" r="5.3" fill="#fff" stroke="#22e622" stroke-width="1.4"/><text x="690.2" y="216.2" font-size="5.5" fill="#eeee00" text-anchor="middle" font-weight="bold">33</text><circle cx="824.0" cy="214.2" r="5.3" fill="#fff" stroke="#22e622" stroke-width="1.4"/><text x="824.0" y="216.2" font-size="5.5" fill="#eeee00" text-anchor="middle" font-weight="bold">32</text><circle cx="963.3" cy="214.2" r="5.3" fill="#fff" stroke="#22e622" stroke-width="1.4"/><text x="963.3" y="216.2" font-size="5.5" fill="#eeee00" text-anchor="middle" font-weight="bold">31</text><circle cx="1029.4" cy="214.2" r="5.3" fill="#fff" stroke="#22e622" stroke-width="1.4"/><text x="1029.4" y="216.2" font-size="5.5" fill="#eeee00" text-anchor="middle" font-weight="bold">30</text><path d="M355.0 228.0L355.0 281.0" stroke="#ff2626" stroke-width="1.2"/><path d="M355.0 227.2L363.3 234.0L355.0 240.8Z" fill="#fff" stroke="#ff2626" stroke-width="1.7" stroke-linejoin="miter"/><circle cx="354.2" cy="234.0" r="4.8" fill="none" stroke="#ff2626" stroke-width="1.3"/><path d="M355.0 227.2V240.8" stroke="#ff2626" stroke-width="1.2"/><rect x="355.0" y="232.8" width="3" height="2.4" fill="#eeee00"/><path d="M507.4 228.0L507.4 281.0" stroke="#ff2626" stroke-width="1.2"/><path d="M507.4 227.2L499.1 234.0L507.4 240.8Z" fill="#fff" stroke="#ff2626" stroke-width="1.7" stroke-linejoin="miter"/><circle cx="508.2" cy="234.0" r="4.8" fill="none" stroke="#ff2626" stroke-width="1.3"/><path d="M507.4 227.2V240.8" stroke="#ff2626" stroke-width="1.2"/><rect x="504.4" y="232.8" width="3" height="2.4" fill="#eeee00"/><path d="M533.3 228.0L533.3 281.0" stroke="#ff2626" stroke-width="1.2"/><path d="M533.3 227.2L541.6 234.0L533.3 240.8Z" fill="#fff" stroke="#ff2626" stroke-width="1.7" stroke-linejoin="miter"/><circle cx="532.5" cy="234.0" r="4.8" fill="none" stroke="#ff2626" stroke-width="1.3"/><path d="M533.3 227.2V240.8" stroke="#ff2626" stroke-width="1.2"/><rect x="533.3" y="232.8" width="3" height="2.4" fill="#eeee00"/><path d="M585.4 228.0L585.4 281.0" stroke="#ff2626" stroke-width="1.2"/><path d="M585.4 227.2L577.1 234.0L585.4 240.8Z" fill="#fff" stroke="#ff2626" stroke-width="1.7" stroke-linejoin="miter"/><circle cx="586.2" cy="234.0" r="4.8" fill="none" stroke="#ff2626" stroke-width="1.3"/><path d="M585.4 227.2V240.8" stroke="#ff2626" stroke-width="1.2"/><rect x="582.4" y="232.8" width="3" height="2.4" fill="#eeee00"/><path d="M611.8 228.0L611.8 281.0" stroke="#ff2626" stroke-width="1.2"/><path d="M611.8 227.2L620.1 234.0L611.8 240.8Z" fill="#fff" stroke="#ff2626" stroke-width="1.7" stroke-linejoin="miter"/><circle cx="611.0" cy="234.0" r="4.8" fill="none" stroke="#ff2626" stroke-width="1.3"/><path d="M611.8 227.2V240.8" stroke="#ff2626" stroke-width="1.2"/><rect x="611.8" y="232.8" width="3" height="2.4" fill="#eeee00"/><path d="M766.7 228.0L766.7 281.0" stroke="#ff2626" stroke-width="1.2"/><path d="M766.7 227.2L758.4 234.0L766.7 240.8Z" fill="#fff" stroke="#ff2626" stroke-width="1.7" stroke-linejoin="miter"/><circle cx="767.5" cy="234.0" r="4.8" fill="none" stroke="#ff2626" stroke-width="1.3"/><path d="M766.7 227.2V240.8" stroke="#ff2626" stroke-width="1.2"/><rect x="763.7" y="232.8" width="3" height="2.4" fill="#eeee00"/><path d="M791.0 228.0L791.0 281.0" stroke="#ff2626" stroke-width="1.2"/><path d="M791.0 227.2L799.3 234.0L791.0 240.8Z" fill="#fff" stroke="#ff2626" stroke-width="1.7" stroke-linejoin="miter"/><circle cx="790.2" cy="234.0" r="4.8" fill="none" stroke="#ff2626" stroke-width="1.3"/><path d="M791.0 227.2V240.8" stroke="#ff2626" stroke-width="1.2"/><rect x="791.0" y="232.8" width="3" height="2.4" fill="#eeee00"/><path d="M887.6 228.0L887.6 281.0" stroke="#ff2626" stroke-width="1.2"/><path d="M887.6 227.2L879.3 234.0L887.6 240.8Z" fill="#fff" stroke="#ff2626" stroke-width="1.7" stroke-linejoin="miter"/><circle cx="888.4" cy="234.0" r="4.8" fill="none" stroke="#ff2626" stroke-width="1.3"/><path d="M887.6 227.2V240.8" stroke="#ff2626" stroke-width="1.2"/><rect x="884.6" y="232.8" width="3" height="2.4" fill="#eeee00"/><path d="M902.6 228.0L902.6 281.0" stroke="#ff2626" stroke-width="1.2"/><path d="M902.6 227.2L910.9 234.0L902.6 240.8Z" fill="#fff" stroke="#ff2626" stroke-width="1.7" stroke-linejoin="miter"/><circle cx="901.8" cy="234.0" r="4.8" fill="none" stroke="#ff2626" stroke-width="1.3"/><path d="M902.6 227.2V240.8" stroke="#ff2626" stroke-width="1.2"/><rect x="902.6" y="232.8" width="3" height="2.4" fill="#eeee00"/><path d="M985.6 228.0L985.6 281.0" stroke="#ff2626" stroke-width="1.2"/><path d="M985.6 227.2L977.3 234.0L985.6 240.8Z" fill="#fff" stroke="#ff2626" stroke-width="1.7" stroke-linejoin="miter"/><circle cx="986.4" cy="234.0" r="4.8" fill="none" stroke="#ff2626" stroke-width="1.3"/><path d="M985.6 227.2V240.8" stroke="#ff2626" stroke-width="1.2"/><rect x="982.6" y="232.8" width="3" height="2.4" fill="#eeee00"/><path d="M1000.6 228.0L1000.6 281.0" stroke="#ff2626" stroke-width="1.2"/><path d="M1000.6 227.2L1008.9 234.0L1000.6 240.8Z" fill="#fff" stroke="#ff2626" stroke-width="1.7" stroke-linejoin="miter"/><circle cx="999.8" cy="234.0" r="4.8" fill="none" stroke="#ff2626" stroke-width="1.3"/><path d="M1000.6 227.2V240.8" stroke="#ff2626" stroke-width="1.2"/><rect x="1000.6" y="232.8" width="3" height="2.4" fill="#eeee00"/><path d="M150 348H174V338L187 333.5H390L700 324.5L1031 319" fill="none" stroke="#eeee00" stroke-width="1.2" stroke-dasharray="5 3"/><path d="M1031 318.5L1089 318.5" fill="none" stroke="#f02cf0" stroke-width="1.2" stroke-dasharray="3 3"/><path d="M1034 318.5L1089 318.5" fill="none" stroke="#eeee00" stroke-width="1.2" stroke-dasharray="3 3 0 3"/><path d="M218 357H400" fill="none" stroke="#ff2626" stroke-width="1.3" stroke-dasharray="20 4 3 4"/><path d="M224 360.5H400V352H1139" fill="none" stroke="#ff2626" stroke-width="1.3" stroke-dasharray="20 4 3 4"/><path d="M913 356.5H1139" fill="none" stroke="#ff2626" stroke-width="1.3" stroke-dasharray="9 3 2 3"/><path d="M400 355.5H913" fill="none" stroke="#ff2626" stroke-width="1.0" stroke-dasharray="20 4 3 4"/><path d="M1139.0 356.5L1186.0 356.5" stroke="#eeee00" stroke-width="1.2"/><path d="M170.0 360.5L224.0 360.5" stroke="#eeee00" stroke-width="1.3"/><path d="M222.0 327.2L256.0 327.2" stroke="#f02cf0" stroke-width="1.4"/><rect x="256.0" y="326.0" width="130.0" height="31.0" fill="url(#wall)"/><path d="M381.0 326.0L381.0 357.0" stroke="#b0b0b0" stroke-width="1"/><path d="M384.0 326.0L384.0 357.0" stroke="#b0b0b0" stroke-width="1"/><path d="M256 326V357H386V326" fill="none" stroke="#f02cf0" stroke-width="1.4"/><rect x="468.8" y="314.0" width="86.8" height="38.0" fill="url(#wall)"/><path d="M474.0 314.0L474.0 352.0" stroke="#b0b0b0" stroke-width="1"/><path d="M480.0 314.0L480.0 352.0" stroke="#b0b0b0" stroke-width="1"/><path d="M549.0 314.0L549.0 352.0" stroke="#b0b0b0" stroke-width="1"/><path d="M468.8 314V352H555.6V314" fill="none" stroke="#f02cf0" stroke-width="1.4"/><rect x="563.5" y="314.0" width="87.4" height="38.0" fill="url(#wall)"/><path d="M570.0 314.0L570.0 352.0" stroke="#b0b0b0" stroke-width="1"/><path d="M640.0 314.0L640.0 352.0" stroke="#b0b0b0" stroke-width="1"/><path d="M646.0 314.0L646.0 352.0" stroke="#b0b0b0" stroke-width="1"/><path d="M563.5 314V352H650.9V314" fill="none" stroke="#f02cf0" stroke-width="1.4"/><rect x="729.5" y="314.0" width="90.3" height="38.0" fill="url(#wall)"/><path d="M737.0 314.0L737.0 352.0" stroke="#b0b0b0" stroke-width="1"/><path d="M744.0 314.0L744.0 352.0" stroke="#b0b0b0" stroke-width="1"/><path d="M805.0 314.0L805.0 352.0" stroke="#b0b0b0" stroke-width="1"/><path d="M812.0 314.0L812.0 352.0" stroke="#b0b0b0" stroke-width="1"/><path d="M729.5 314V352H819.8V314" fill="none" stroke="#f02cf0" stroke-width="1.4"/><rect x="867.2" y="314.0" width="55.3" height="38.0" fill="url(#wall)"/><path d="M874.0 314.0L874.0 352.0" stroke="#b0b0b0" stroke-width="1"/><path d="M881.0 314.0L881.0 352.0" stroke="#b0b0b0" stroke-width="1"/><path d="M908.0 314.0L908.0 352.0" stroke="#b0b0b0" stroke-width="1"/><path d="M915.0 314.0L915.0 352.0" stroke="#b0b0b0" stroke-width="1"/><path d="M867.2 314V352H922.5V314" fill="none" stroke="#f02cf0" stroke-width="1.4"/><rect x="969.5" y="315.0" width="55.5" height="36.0" fill="url(#wall)"/><path d="M976.0 315.0L976.0 351.0" stroke="#b0b0b0" stroke-width="1"/><path d="M983.0 315.0L983.0 351.0" stroke="#b0b0b0" stroke-width="1"/><path d="M1000.0 315.0L1000.0 351.0" stroke="#b0b0b0" stroke-width="1"/><path d="M1011.0 315.0L1011.0 351.0" stroke="#b0b0b0" stroke-width="1"/><path d="M1018.0 315.0L1018.0 351.0" stroke="#b0b0b0" stroke-width="1"/><path d="M969.5 315V351H1025V315" fill="none" stroke="#f02cf0" stroke-width="1.4"/><rect x="555.6" y="323.0" width="7.9" height="29.0" fill="#fff"/><path d="M555.6 352V323H563.5V352" fill="none" stroke="#f02cf0" stroke-width="1.4"/><rect x="298.4" y="346.0" width="72.8" height="8.7" fill="none" stroke="#ff2626" stroke-width="1.3"/><path d="M316.6 346.0L316.6 354.7" stroke="#ff2626" stroke-width="1.1"/><path d="M334.8 346.0L334.8 354.7" stroke="#ff2626" stroke-width="1.1"/><path d="M353.0 346.0L353.0 354.7" stroke="#ff2626" stroke-width="1.1"/><path d="M300.4 353.7L307.5 347L314.59999999999997 353.7" fill="none" stroke="#ff2626" stroke-width="0.9"/><path d="M355.0 353.7L362.09999999999997 347L369.2 353.7" fill="none" stroke="#ff2626" stroke-width="0.9"/><rect x="486.3" y="343.9" width="57.0" height="5.6" fill="none" stroke="#ff2626" stroke-width="1.3"/><path d="M500.6 343.9L500.6 349.5" stroke="#ff2626" stroke-width="1.1"/><path d="M514.8 343.9L514.8 349.5" stroke="#ff2626" stroke-width="1.1"/><path d="M529.0 343.9L529.0 349.5" stroke="#ff2626" stroke-width="1.1"/><rect x="487.8" y="346.4" width="11.2" height="2.5" fill="#eeee00"/><rect x="530.5" y="346.4" width="11.2" height="2.5" fill="#eeee00"/><rect x="575.8" y="343.9" width="57.9" height="5.6" fill="none" stroke="#12eefc" stroke-width="1.3"/><path d="M590.3 343.9L590.3 349.5" stroke="#ff2626" stroke-width="1.1"/><path d="M604.8 343.9L604.8 349.5" stroke="#ff2626" stroke-width="1.1"/><path d="M619.2 343.9L619.2 349.5" stroke="#ff2626" stroke-width="1.1"/><rect x="577.3" y="346.4" width="11.5" height="2.5" fill="#eeee00"/><rect x="620.7" y="346.4" width="11.5" height="2.5" fill="#eeee00"/><rect x="747.0" y="337.7" width="60.2" height="11.8" fill="none" stroke="#ff2626" stroke-width="1.3"/><path d="M762.0 337.7L762.0 349.5" stroke="#ff2626" stroke-width="1.1"/><path d="M777.1 337.7L777.1 349.5" stroke="#ff2626" stroke-width="1.1"/><path d="M792.2 337.7L792.2 349.5" stroke="#ff2626" stroke-width="1.1"/><path d="M749 348.5L754.525 338.7L760.05 348.5" fill="none" stroke="#ff2626" stroke-width="0.9"/><path d="M794.1500000000001 348.5L799.6750000000001 338.7L805.2 348.5" fill="none" stroke="#ff2626" stroke-width="0.9"/><path d="M256 307H303V302.5H308V306H313V303.5H317V306H373V303H379V302L386 299V318Q380 324 373 325.5H256Z" fill="url(#rail)" stroke="#2424ff" stroke-width="1"/><path d="M311 309H373M311 321H373" fill="none" stroke="#ff2626" stroke-width="1.1"/><path d="M256 326.5H373Q380 325 386 319" fill="none" stroke="#12eefc" stroke-width="2"/><rect x="298.0" y="322.0" width="10.5" height="8.0" fill="none" stroke="#ff2626" stroke-width="1.2"/><path d="M471 300Q476 305 484 306H555V303H560V306H580V300.5H586V301H640L647 297V316Q640 321 630 322.5H484Q476 321 471 316Z" fill="url(#rail)" stroke="#2424ff" stroke-width="1"/><path d="M585 306H640M585 320H640" fill="none" stroke="#ff2626" stroke-width="1.1"/><path d="M484 324H630Q640 322 647 317" fill="none" stroke="#12eefc" stroke-width="2"/><rect x="582.0" y="315.0" width="13.0" height="8.0" fill="none" stroke="#ff2626" stroke-width="1.2"/><path d="M733 295Q738 300 746 301.5H787V294.5H792V296H798V294H816V311Q808 316 800 317H746Q738 316 733 310Z" fill="url(#rail)" stroke="#2424ff" stroke-width="1"/><path d="M746 303H767M746 316H767M792 304H815" fill="none" stroke="#ff2626" stroke-width="1.1"/><path d="M738 318H800Q810 317 816 312" fill="none" stroke="#12eefc" stroke-width="2"/><rect x="789.0" y="310.0" width="12.0" height="7.5" fill="none" stroke="#ff2626" stroke-width="1.2"/><path d="M870 292Q874 296 880 296.5H910L919 291V309Q912 314 905 315H885Q876 314 870 309Z" fill="url(#rail)" stroke="#2424ff" stroke-width="1"/><path d="M875 316H905Q914 314 919 310" fill="none" stroke="#12eefc" stroke-width="2"/><rect x="884.0" y="309.0" width="12.0" height="7.0" fill="none" stroke="#ff2626" stroke-width="1.2"/><path d="M973 292H985V297H1029V315H985Q978 313 973 309Z" fill="url(#rail)" stroke="#2424ff" stroke-width="1"/><path d="M978 316H1028" fill="none" stroke="#12eefc" stroke-width="2"/><path d="M983 298L990 300M983 311L990 313" fill="none" stroke="#ff2626" stroke-width="1.1"/><path d="M256.0 306.0L303.0 306.0" stroke="#2424ff" stroke-width="2.4" stroke-dasharray="1.5 1.3"/><path d="M317.0 306.0L373.0 306.0" stroke="#2424ff" stroke-width="2.4" stroke-dasharray="1.5 1.3"/><path d="M484.0 305.0L555.0 305.0" stroke="#2424ff" stroke-width="2.4" stroke-dasharray="1.5 1.3"/><path d="M560.0 305.0L580.0 305.0" stroke="#2424ff" stroke-width="2.4" stroke-dasharray="1.5 1.3"/><path d="M586.0 300.0L640.0 300.0" stroke="#2424ff" stroke-width="2.4" stroke-dasharray="1.5 1.3"/><path d="M746.0 300.5L787.0 300.5" stroke="#2424ff" stroke-width="2.4" stroke-dasharray="1.5 1.3"/><path d="M798.0 293.0L816.0 293.0" stroke="#2424ff" stroke-width="2.4" stroke-dasharray="1.5 1.3"/><path d="M880.0 295.5L910.0 295.5" stroke="#2424ff" stroke-width="2.4" stroke-dasharray="1.5 1.3"/><path d="M985.0 296.0L1029.0 296.0" stroke="#2424ff" stroke-width="2.4" stroke-dasharray="1.5 1.3"/><rect x="386.0" y="240.6" width="85.5" height="63.8" fill="url(#gbrick)"/><rect x="401.4" y="260.4" width="22.8" height="44.0" fill="#fff"/><path d="M401.4 304.4V260.4H424.2V304.4" fill="none" stroke="#22e622" stroke-width="1.1"/><rect x="433.0" y="260.4" width="23.7" height="44.0" fill="#fff"/><path d="M433 304.4V260.4H456.7V304.4" fill="none" stroke="#22e622" stroke-width="1.1"/><rect x="386.0" y="240.6" width="85.5" height="63.8" fill="none" stroke="#22e622" stroke-width="1.3"/><path d="M386.0 243.7L471.5 243.7" stroke="#22e622" stroke-width="1.3"/><path d="M386.0 246.0L471.5 246.0" stroke="#b0b0b0" stroke-width="0.9"/><rect x="393.0" y="255.2" width="71.5" height="3.4" fill="#fff"/><path d="M393 255.4H464.5" fill="none" stroke="#12eefc" stroke-width="1.1"/><path d="M393 258.3H464.5" fill="none" stroke="#eeee00" stroke-width="1.1"/><path d="M394.5 258.6V292M463.0 258.6V292" fill="none" stroke="#eeee00" stroke-width="1.0"/><rect x="386.0" y="296.0" width="10.5" height="14.0" fill="#fff"/><rect x="461.0" y="296.0" width="10.5" height="14.0" fill="#fff"/><path d="M386 312V298.5Q387 296 391.2 296Q395.5 296 396.5 298.5V304.4H461.0V298.5Q462.0 296 466.3 296Q470.5 296 471.5 298.5V312" fill="none" stroke="#f02cf0" stroke-width="1.4"/><rect x="390" y="289" width="2.5" height="5" fill="#ff2626"/><rect x="465.0" y="289" width="2.5" height="5" fill="#ff2626"/><rect x="647.5" y="240.6" width="85.5" height="63.8" fill="url(#gbrick)"/><rect x="662.6" y="260.4" width="23.7" height="44.0" fill="#fff"/><path d="M662.6 304.4V260.4H686.3V304.4" fill="none" stroke="#22e622" stroke-width="1.1"/><rect x="694.4" y="260.4" width="23.3" height="44.0" fill="#fff"/><path d="M694.4 304.4V260.4H717.7V304.4" fill="none" stroke="#22e622" stroke-width="1.1"/><rect x="647.5" y="240.6" width="85.5" height="63.8" fill="none" stroke="#22e622" stroke-width="1.3"/><path d="M647.5 243.7L733.0 243.7" stroke="#22e622" stroke-width="1.3"/><path d="M647.5 246.0L733.0 246.0" stroke="#b0b0b0" stroke-width="0.9"/><rect x="654.5" y="255.2" width="71.5" height="3.4" fill="#fff"/><path d="M654.5 255.4H726" fill="none" stroke="#12eefc" stroke-width="1.1"/><path d="M654.5 258.3H726" fill="none" stroke="#eeee00" stroke-width="1.1"/><path d="M656.0 258.6V292M724.5 258.6V292" fill="none" stroke="#eeee00" stroke-width="1.0"/><rect x="647.5" y="296.0" width="10.5" height="14.0" fill="#fff"/><rect x="722.5" y="296.0" width="10.5" height="14.0" fill="#fff"/><path d="M647.5 312V298.5Q648.5 296 652.7 296Q657.0 296 658.0 298.5V304.4H722.5V298.5Q723.5 296 727.8 296Q732 296 733 298.5V312" fill="none" stroke="#f02cf0" stroke-width="1.4"/><rect x="651.5" y="289" width="2.5" height="5" fill="#ff2626"/><rect x="726.5" y="289" width="2.5" height="5" fill="#ff2626"/><rect x="816.3" y="240.6" width="54.4" height="63.8" fill="url(#gbrick)"/><rect x="831.2" y="260.4" width="24.6" height="44.0" fill="#fff"/><path d="M831.2 304.4V260.4H855.8V304.4" fill="none" stroke="#22e622" stroke-width="1.1"/><rect x="816.3" y="240.6" width="54.4" height="63.8" fill="none" stroke="#22e622" stroke-width="1.3"/><path d="M816.3 243.7L870.7 243.7" stroke="#22e622" stroke-width="1.3"/><path d="M816.3 246.0L870.7 246.0" stroke="#b0b0b0" stroke-width="0.9"/><rect x="823.3" y="255.2" width="40.4" height="3.4" fill="#fff"/><path d="M823.3 255.4H863.7" fill="none" stroke="#12eefc" stroke-width="1.1"/><path d="M823.3 258.3H863.7" fill="none" stroke="#eeee00" stroke-width="1.1"/><path d="M824.8 258.6V292M862.2 258.6V292" fill="none" stroke="#eeee00" stroke-width="1.0"/><rect x="816.3" y="296.0" width="10.5" height="14.0" fill="#fff"/><rect x="860.2" y="296.0" width="10.5" height="14.0" fill="#fff"/><path d="M816.3 312V298.5Q817.3 296 821.5 296Q825.8 296 826.8 298.5V304.4H860.2V298.5Q861.2 296 865.5 296Q869.7 296 870.7 298.5V312" fill="none" stroke="#f02cf0" stroke-width="1.4"/><rect x="820.3" y="289" width="2.5" height="5" fill="#ff2626"/><rect x="864.2" y="289" width="2.5" height="5" fill="#ff2626"/><rect x="919.4" y="240.6" width="53.4" height="63.8" fill="url(#gbrick)"/><rect x="934.4" y="260.4" width="23.4" height="44.0" fill="#fff"/><path d="M934.4 304.4V260.4H957.8V304.4" fill="none" stroke="#22e622" stroke-width="1.1"/><rect x="919.4" y="240.6" width="53.4" height="63.8" fill="none" stroke="#22e622" stroke-width="1.3"/><path d="M919.4 243.7L972.8 243.7" stroke="#22e622" stroke-width="1.3"/><path d="M919.4 246.0L972.8 246.0" stroke="#b0b0b0" stroke-width="0.9"/><rect x="926.4" y="255.2" width="39.4" height="3.4" fill="#fff"/><path d="M926.4 255.4H965.8" fill="none" stroke="#12eefc" stroke-width="1.1"/><path d="M926.4 258.3H965.8" fill="none" stroke="#eeee00" stroke-width="1.1"/><path d="M927.9 258.6V292M964.3 258.6V292" fill="none" stroke="#eeee00" stroke-width="1.0"/><rect x="919.4" y="296.0" width="10.5" height="14.0" fill="#fff"/><rect x="962.3" y="296.0" width="10.5" height="14.0" fill="#fff"/><path d="M919.4 312V298.5Q920.4 296 924.6 296Q928.9 296 929.9 298.5V304.4H962.3V298.5Q963.3 296 967.5999999999999 296Q971.8 296 972.8 298.5V312" fill="none" stroke="#f02cf0" stroke-width="1.4"/><rect x="923.4" y="289" width="2.5" height="5" fill="#ff2626"/><rect x="966.3" y="289" width="2.5" height="5" fill="#ff2626"/><path d="M293.5 219.5L293.5 375.5" stroke="#ff2626" stroke-width="1.3" stroke-dasharray="22 2.5 2 2.5"/><path d="M429.0 219.5L429.0 375.5" stroke="#ff2626" stroke-width="1.3" stroke-dasharray="22 2.5 2 2.5"/><path d="M559.5 219.5L559.5 375.5" stroke="#ff2626" stroke-width="1.3" stroke-dasharray="22 2.5 2 2.5"/><path d="M690.2 219.5L690.2 375.5" stroke="#ff2626" stroke-width="1.3" stroke-dasharray="22 2.5 2 2.5"/><path d="M824.0 219.5L824.0 375.5" stroke="#ff2626" stroke-width="1.3" stroke-dasharray="22 2.5 2 2.5"/><path d="M963.3 219.5L963.3 375.5" stroke="#ff2626" stroke-width="1.3" stroke-dasharray="22 2.5 2 2.5"/><path d="M1029.4 219.5L1029.4 375.5" stroke="#ff2626" stroke-width="1.3" stroke-dasharray="22 2.5 2 2.5"/><path d="M429.0 260.0L429.0 304.0" stroke="#ff2626" stroke-width="1.6"/><path d="M690.2 260.0L690.2 304.0" stroke="#ff2626" stroke-width="1.6"/><path d="M963.3 246.0L963.3 304.0" stroke="#ff2626" stroke-width="1.2" stroke-dasharray="14 3 2 3"/><path d="M429.0 246.0L429.0 304.0" stroke="#ff2626" stroke-width="1.2"/><path d="M690.2 246.0L690.2 304.0" stroke="#ff2626" stroke-width="1.2"/><path d="M824.0 246.0L824.0 304.0" stroke="#ff2626" stroke-width="1.2"/><text x="170.0" y="353.0" font-size="5" fill="#eeee00" font-weight="normal" text-anchor="start" textLength="50" lengthAdjust="spacingAndGlyphs" stroke="#eeee00" stroke-width="0.2">FFL +27.320 LEVEL -02</text><text x="190.0" y="368.0" font-size="5" fill="#eeee00" font-weight="normal" text-anchor="start" textLength="31" lengthAdjust="spacingAndGlyphs" stroke="#eeee00" stroke-width="0.2">SSL +27.050m</text><text x="446.0" y="360.0" font-size="4.2" fill="#eeee00" font-weight="normal" text-anchor="start" textLength="32" lengthAdjust="spacingAndGlyphs">SSL +27.450m</text><text x="449.0" y="366.0" font-size="4" fill="#eeee00" font-weight="normal" text-anchor="start"></text><rect x="325.4" y="362.0" width="19.3" height="4.0" fill="#fff"/><rect x="325.4" y="362.0" width="19.3" height="4.0" fill="none" stroke="#ff2626" stroke-width="1"/><rect x="327.4" y="363.0" width="15.3" height="2.0" fill="#eeee00"/><rect x="505.0" y="357.0" width="19.0" height="4.0" fill="#fff"/><rect x="505.0" y="357.0" width="19.0" height="4.0" fill="none" stroke="#ff2626" stroke-width="1"/><rect x="507.0" y="358.0" width="15.0" height="2.0" fill="#eeee00"/><rect x="595.0" y="357.0" width="19.0" height="4.0" fill="#fff"/><rect x="595.0" y="357.0" width="19.0" height="4.0" fill="none" stroke="#ff2626" stroke-width="1"/><rect x="597.0" y="358.0" width="15.0" height="2.0" fill="#eeee00"/><rect x="767.5" y="357.0" width="19.0" height="4.0" fill="#fff"/><rect x="767.5" y="357.0" width="19.0" height="4.0" fill="none" stroke="#ff2626" stroke-width="1"/><rect x="769.5" y="358.0" width="15.0" height="2.0" fill="#eeee00"/><text x="718.0" y="363.0" font-size="4.2" fill="#eeee00" font-weight="normal" text-anchor="start" textLength="34" lengthAdjust="spacingAndGlyphs">SSL +27.450m</text><text x="869.0" y="364.0" font-size="4.2" fill="#eeee00" font-weight="normal" text-anchor="start" textLength="38" lengthAdjust="spacingAndGlyphs">SSL +27.527m</text><text x="1146.0" y="348.0" font-size="4.5" fill="#eeee00" font-weight="normal" text-anchor="start" textLength="40" lengthAdjust="spacingAndGlyphs">FFL +28.790 LEVEL -0x</text><text x="1146.0" y="363.0" font-size="4.2" fill="#eeee00" font-weight="normal" text-anchor="start" textLength="30" lengthAdjust="spacingAndGlyphs">SSL +27.275m</text><text x="323.8" y="387.0" font-size="8.5" fill="#eeee00" font-weight="normal" text-anchor="start" textLength="322" lengthAdjust="spacing" stroke="#eeee00" stroke-width="0.3">EASTERN TERRACE: EAST ELEVATION WITHIN LIGHTWELL</text><text x="649.3" y="387.0" font-size="7.5" fill="#eeee00" font-weight="normal" text-anchor="start" textLength="203.5" lengthAdjust="spacingAndGlyphs" stroke="#eeee00" stroke-width="0.2">(West Elevation within Lightwell refer to KSR-SJP-ET303)</text><path d="M386.0 357.0L386.0 304.0" stroke="#f02cf0" stroke-width="1.4"/><rect x="181.6" y="419.8" width="978.0" height="76.2" fill="none" stroke="#111" stroke-width="1.6"/><path d="M186.3 419.8V505.2H1145.7V419.8" fill="none" stroke="#111" stroke-width="1.6"/><path d="M186.3 493.6L1151.0 493.6" stroke="#111" stroke-width="1.3"/><rect x="187.0" y="494.3" width="963.0" height="1.0" fill="#c8c8c8"/><path d="M1150.5 420.0L1150.5 496.0" stroke="#111" stroke-width="1.2"/><path d="M199.0 428.4L1132.0 428.4" stroke="#ff2626" stroke-width="1.2" stroke-dasharray="20 3 3 3"/><path d="M199.0 470.9L1132.0 470.9" stroke="#ff2626" stroke-width="1.2" stroke-dasharray="20 3 3 3"/><circle cx="192.2" cy="428.4" r="4.3" fill="#fff" stroke="#22e622" stroke-width="1.4"/><rect x="189.7" y="426.9" width="5" height="3" fill="#eeee00" opacity=".8"/><circle cx="192.2" cy="470.9" r="4.3" fill="#fff" stroke="#22e622" stroke-width="1.4"/><rect x="189.7" y="469.4" width="5" height="3" fill="#eeee00" opacity=".8"/><circle cx="1138.7" cy="428.4" r="4.3" fill="#fff" stroke="#22e622" stroke-width="1.4"/><rect x="1136.2" y="426.9" width="5" height="3" fill="#eeee00" opacity=".8"/><circle cx="1138.7" cy="470.9" r="4.3" fill="#fff" stroke="#22e622" stroke-width="1.4"/><rect x="1136.2" y="469.4" width="5" height="3" fill="#eeee00" opacity=".8"/><path d="M206.4 422.0L206.4 472.0" stroke="#ff2626" stroke-width="1.2"/><path d="M211.5 422.0L211.5 472.0" stroke="#ff2626" stroke-width="1.2"/><rect x="275.0" y="446.0" width="13.0" height="3.0" fill="#ff2626"/><path d="M290 423H1030M290 431.5H1030" fill="none" stroke="#ff2626" stroke-width="1.2"/><rect x="292.4" y="423.5" width="16.3" height="7.0" fill="#c4c4c4"/><rect x="292.4" y="423.5" width="16.3" height="4.5" fill="none" stroke="#f02cf0" stroke-width="1.0"/><rect x="335.2" y="423.5" width="32.7" height="7.0" fill="#c4c4c4"/><rect x="335.2" y="423.5" width="32.7" height="4.5" fill="none" stroke="#f02cf0" stroke-width="1.0"/><rect x="386.2" y="423.5" width="32.0" height="7.0" fill="#c4c4c4"/><rect x="386.2" y="423.5" width="32.0" height="4.5" fill="none" stroke="#f02cf0" stroke-width="1.0"/><rect x="443.8" y="423.5" width="27.6" height="7.0" fill="#c4c4c4"/><rect x="443.8" y="423.5" width="27.6" height="4.5" fill="none" stroke="#f02cf0" stroke-width="1.0"/><rect x="488.0" y="423.5" width="30.6" height="7.0" fill="#c4c4c4"/><rect x="488.0" y="423.5" width="30.6" height="4.5" fill="none" stroke="#f02cf0" stroke-width="1.0"/><rect x="543.7" y="423.5" width="12.3" height="7.0" fill="#c4c4c4"/><rect x="543.7" y="423.5" width="12.3" height="4.5" fill="none" stroke="#f02cf0" stroke-width="1.0"/><rect x="581.8" y="423.5" width="26.5" height="7.0" fill="#c4c4c4"/><rect x="581.8" y="423.5" width="26.5" height="4.5" fill="none" stroke="#f02cf0" stroke-width="1.0"/><rect x="625.3" y="423.5" width="14.3" height="7.0" fill="#c4c4c4"/><rect x="625.3" y="423.5" width="14.3" height="4.5" fill="none" stroke="#f02cf0" stroke-width="1.0"/><rect x="656.0" y="423.5" width="26.0" height="7.0" fill="#c4c4c4"/><rect x="656.0" y="423.5" width="26.0" height="4.5" fill="none" stroke="#f02cf0" stroke-width="1.0"/><rect x="708.0" y="423.5" width="11.6" height="7.0" fill="#c4c4c4"/><rect x="708.0" y="423.5" width="11.6" height="4.5" fill="none" stroke="#f02cf0" stroke-width="1.0"/><rect x="745.5" y="423.5" width="34.5" height="7.0" fill="#c4c4c4"/><rect x="745.5" y="423.5" width="34.5" height="4.5" fill="none" stroke="#f02cf0" stroke-width="1.0"/><rect x="806.7" y="423.5" width="11.5" height="7.0" fill="#c4c4c4"/><rect x="806.7" y="423.5" width="11.5" height="4.5" fill="none" stroke="#f02cf0" stroke-width="1.0"/><rect x="844.0" y="423.5" width="26.0" height="7.0" fill="#c4c4c4"/><rect x="844.0" y="423.5" width="26.0" height="4.5" fill="none" stroke="#f02cf0" stroke-width="1.0"/><rect x="886.2" y="423.5" width="15.6" height="7.0" fill="#c4c4c4"/><rect x="886.2" y="423.5" width="15.6" height="4.5" fill="none" stroke="#f02cf0" stroke-width="1.0"/><rect x="918.0" y="423.5" width="24.4" height="7.0" fill="#c4c4c4"/><rect x="918.0" y="423.5" width="24.4" height="4.5" fill="none" stroke="#f02cf0" stroke-width="1.0"/><rect x="964.9" y="423.5" width="25.1" height="7.0" fill="#c4c4c4"/><rect x="964.9" y="423.5" width="25.1" height="4.5" fill="none" stroke="#f02cf0" stroke-width="1.0"/><rect x="1009.0" y="423.5" width="19.8" height="7.0" fill="#c4c4c4"/><rect x="1009.0" y="423.5" width="19.8" height="4.5" fill="none" stroke="#f02cf0" stroke-width="1.0"/><rect x="311.0" y="427.5" width="23.0" height="4.0" fill="#ff2626"/><rect x="420.0" y="427.5" width="22.0" height="4.0" fill="#ff2626"/><rect x="519.0" y="427.5" width="23.0" height="4.0" fill="#ff2626"/><rect x="557.0" y="427.5" width="23.0" height="4.0" fill="#ff2626"/><rect x="640.0" y="427.5" width="15.0" height="4.0" fill="#ff2626"/><rect x="683.0" y="427.5" width="24.0" height="4.0" fill="#ff2626"/><rect x="721.0" y="427.5" width="23.0" height="4.0" fill="#ff2626"/><rect x="781.0" y="427.5" width="24.0" height="4.0" fill="#ff2626"/><rect x="819.0" y="427.5" width="24.0" height="4.0" fill="#ff2626"/><rect x="871.0" y="427.5" width="14.0" height="4.0" fill="#ff2626"/><rect x="943.0" y="427.5" width="21.0" height="4.0" fill="#ff2626"/><rect x="991.0" y="427.5" width="17.0" height="4.0" fill="#ff2626"/><circle cx="358" cy="428" r="5.5" fill="none" stroke="#22e622" stroke-width="1" stroke-dasharray="2 1.5"/><circle cx="417" cy="428" r="5.5" fill="none" stroke="#22e622" stroke-width="1" stroke-dasharray="2 1.5"/><circle cx="439" cy="428" r="5.5" fill="none" stroke="#22e622" stroke-width="1" stroke-dasharray="2 1.5"/><circle cx="505" cy="428" r="5.5" fill="none" stroke="#22e622" stroke-width="1" stroke-dasharray="2 1.5"/><circle cx="549" cy="428" r="5.5" fill="none" stroke="#22e622" stroke-width="1" stroke-dasharray="2 1.5"/><circle cx="689" cy="428" r="5.5" fill="none" stroke="#22e622" stroke-width="1" stroke-dasharray="2 1.5"/><circle cx="781" cy="428" r="5.5" fill="none" stroke="#22e622" stroke-width="1" stroke-dasharray="2 1.5"/><circle cx="912" cy="428" r="5.5" fill="none" stroke="#22e622" stroke-width="1" stroke-dasharray="2 1.5"/><circle cx="943" cy="428" r="5.5" fill="none" stroke="#22e622" stroke-width="1" stroke-dasharray="2 1.5"/><path d="M291 432V452Q291 475 314 475H1125" fill="none" stroke="#12eefc" stroke-width="1.3"/><path d="M297 432V452Q297 469 314 469H1125" fill="none" stroke="#12eefc" stroke-width="1.3"/><path d="M300.5 432V452Q300.5 465 314 465H350" fill="none" stroke="#12eefc" stroke-width="1.2"/><path d="M314.0 472.0L1125.0 472.0" stroke="#ff2626" stroke-width="0.9" stroke-dasharray="6 3"/><path d="M355 432V455M362 432V455" fill="none" stroke="#12eefc" stroke-width="1.2"/><path d="M406 432V455M413 432V455" fill="none" stroke="#12eefc" stroke-width="1.2"/><path d="M455 432V455M462 432V455" fill="none" stroke="#12eefc" stroke-width="1.2"/><path d="M500 432V455M507 432V455" fill="none" stroke="#12eefc" stroke-width="1.2"/><path d="M572 432V455M579 432V455" fill="none" stroke="#12eefc" stroke-width="1.2"/><path d="M592 432V455M599 432V455" fill="none" stroke="#12eefc" stroke-width="1.2"/><path d="M664 432V455M671 432V455" fill="none" stroke="#12eefc" stroke-width="1.2"/><path d="M683 432V455M690 432V455" fill="none" stroke="#12eefc" stroke-width="1.2"/><path d="M852 432V455M859 432V455" fill="none" stroke="#12eefc" stroke-width="1.2"/><path d="M929 432V455M936 432V455" fill="none" stroke="#12eefc" stroke-width="1.2"/><rect x="360.4" y="432.4" width="31.9" height="19.8" fill="url(#tile)"/><rect x="359.4" y="432.0" width="33.9" height="20.5" fill="none" stroke="#12eefc" stroke-width="1"/><rect x="373.9" y="436.0" width="5.0" height="8.0" fill="#eeee00"/><rect x="464.2" y="432.4" width="31.9" height="19.8" fill="url(#tile)"/><rect x="463.2" y="432.0" width="33.9" height="20.5" fill="none" stroke="#12eefc" stroke-width="1"/><rect x="477.6" y="436.0" width="5.0" height="8.0" fill="#eeee00"/><rect x="600.2" y="432.4" width="27.8" height="19.8" fill="url(#tile)"/><rect x="599.2" y="432.0" width="29.8" height="20.5" fill="none" stroke="#12eefc" stroke-width="1"/><rect x="611.6" y="436.0" width="5.0" height="8.0" fill="#eeee00"/><rect x="636.2" y="432.4" width="27.8" height="19.8" fill="url(#tile)"/><rect x="635.2" y="432.0" width="29.8" height="20.5" fill="none" stroke="#12eefc" stroke-width="1"/><rect x="647.6" y="436.0" width="5.0" height="8.0" fill="#eeee00"/><rect x="861.7" y="432.4" width="28.6" height="19.8" fill="url(#tile)"/><rect x="860.7" y="432.0" width="30.6" height="20.5" fill="none" stroke="#12eefc" stroke-width="1"/><rect x="873.5" y="436.0" width="5.0" height="8.0" fill="#eeee00"/><rect x="898.5" y="432.4" width="27.1" height="19.8" fill="url(#tile)"/><rect x="897.5" y="432.0" width="29.1" height="20.5" fill="none" stroke="#12eefc" stroke-width="1"/><rect x="909.5" y="436.0" width="5.0" height="8.0" fill="#eeee00"/><path d="M350 457Q377.5 449 405 457" fill="none" stroke="#b0b0b0" stroke-width="1.2"/><path d="M356.0 461.0L399.0 461.0" stroke="#12eefc" stroke-width="1.0"/><path d="M356.0 465.0L399.0 465.0" stroke="#12eefc" stroke-width="1.0"/><path d="M356.0 469.0L399.0 469.0" stroke="#12eefc" stroke-width="1.0"/><path d="M356.0 473.0L399.0 473.0" stroke="#12eefc" stroke-width="1.0"/><path d="M352 478H403" fill="none" stroke="#12eefc" stroke-width="1.2" stroke-dasharray="3 2"/><path d="M350 452L363 449L364 457L352 462Z" fill="#f02cf0" fill-opacity=".5" stroke="#22e622" stroke-width="1.2"/><path d="M405 452L392 449L391 457L403 462Z" fill="#f02cf0" fill-opacity=".5" stroke="#22e622" stroke-width="1.2"/><path d="M354 462Q352 474 344 478M401 462Q403 474 411 478" fill="none" stroke="#ff2626" stroke-width="1.5"/><path d="M455 457Q480.0 449 505 457" fill="none" stroke="#b0b0b0" stroke-width="1.2"/><path d="M461.0 461.0L499.0 461.0" stroke="#12eefc" stroke-width="1.0"/><path d="M461.0 465.0L499.0 465.0" stroke="#12eefc" stroke-width="1.0"/><path d="M461.0 469.0L499.0 469.0" stroke="#12eefc" stroke-width="1.0"/><path d="M461.0 473.0L499.0 473.0" stroke="#12eefc" stroke-width="1.0"/><path d="M457 478H503" fill="none" stroke="#12eefc" stroke-width="1.2" stroke-dasharray="3 2"/><path d="M455 452L468 449L469 457L457 462Z" fill="#f02cf0" fill-opacity=".5" stroke="#22e622" stroke-width="1.2"/><path d="M505 452L492 449L491 457L503 462Z" fill="#f02cf0" fill-opacity=".5" stroke="#22e622" stroke-width="1.2"/><path d="M459 462Q457 474 449 478M501 462Q503 474 511 478" fill="none" stroke="#ff2626" stroke-width="1.5"/><path d="M592 457Q632.0 449 672 457" fill="none" stroke="#b0b0b0" stroke-width="1.2"/><path d="M598.0 461.0L666.0 461.0" stroke="#12eefc" stroke-width="1.0"/><path d="M598.0 465.0L666.0 465.0" stroke="#12eefc" stroke-width="1.0"/><path d="M598.0 469.0L666.0 469.0" stroke="#12eefc" stroke-width="1.0"/><path d="M598.0 473.0L666.0 473.0" stroke="#12eefc" stroke-width="1.0"/><path d="M594 478H670" fill="none" stroke="#12eefc" stroke-width="1.2" stroke-dasharray="3 2"/><path d="M592 452L605 449L606 457L594 462Z" fill="#f02cf0" fill-opacity=".5" stroke="#22e622" stroke-width="1.2"/><path d="M672 452L659 449L658 457L670 462Z" fill="#f02cf0" fill-opacity=".5" stroke="#22e622" stroke-width="1.2"/><path d="M596 462Q594 474 586 478M668 462Q670 474 678 478" fill="none" stroke="#ff2626" stroke-width="1.5"/><path d="M853 457Q893.0 449 933 457" fill="none" stroke="#b0b0b0" stroke-width="1.2"/><path d="M859.0 461.0L927.0 461.0" stroke="#12eefc" stroke-width="1.0"/><path d="M859.0 465.0L927.0 465.0" stroke="#12eefc" stroke-width="1.0"/><path d="M859.0 469.0L927.0 469.0" stroke="#12eefc" stroke-width="1.0"/><path d="M859.0 473.0L927.0 473.0" stroke="#12eefc" stroke-width="1.0"/><path d="M855 478H931" fill="none" stroke="#12eefc" stroke-width="1.2" stroke-dasharray="3 2"/><path d="M853 452L866 449L867 457L855 462Z" fill="#f02cf0" fill-opacity=".5" stroke="#22e622" stroke-width="1.2"/><path d="M933 452L920 449L919 457L931 462Z" fill="#f02cf0" fill-opacity=".5" stroke="#22e622" stroke-width="1.2"/><path d="M857 462Q855 474 847 478M929 462Q931 474 939 478" fill="none" stroke="#ff2626" stroke-width="1.5"/><rect x="323" y="442" width="24.5" height="8.7" rx="4.3" fill="#fff" stroke="#ff2626" stroke-width="1.2"/><rect x="329.0" y="444.5" width="12.5" height="3.5" fill="#eeee00"/><rect x="405" y="442" width="25" height="8.7" rx="4.3" fill="#fff" stroke="#ff2626" stroke-width="1.2"/><rect x="411.0" y="444.5" width="13.0" height="3.5" fill="#eeee00"/><rect x="414.8" y="434" width="25.19999999999999" height="8.7" rx="4.3" fill="#fff" stroke="#ff2626" stroke-width="1.2"/><rect x="420.8" y="436.5" width="13.2" height="3.5" fill="#eeee00"/><rect x="528.8" y="439.2" width="23.800000000000068" height="8.7" rx="4.3" fill="#fff" stroke="#ff2626" stroke-width="1.2"/><rect x="534.8" y="441.7" width="11.8" height="3.5" fill="#eeee00"/><rect x="712.8" y="439.2" width="23.800000000000068" height="8.7" rx="4.3" fill="#fff" stroke="#ff2626" stroke-width="1.2"/><rect x="718.8" y="441.7" width="11.8" height="3.5" fill="#eeee00"/><rect x="791.7" y="439.2" width="23.799999999999955" height="8.7" rx="4.3" fill="#fff" stroke="#ff2626" stroke-width="1.2"/><rect x="797.7" y="441.7" width="11.8" height="3.5" fill="#eeee00"/><rect x="998.9" y="439.2" width="24.399999999999977" height="8.7" rx="4.3" fill="#fff" stroke="#ff2626" stroke-width="1.2"/><rect x="1004.9" y="441.7" width="12.4" height="3.5" fill="#eeee00"/><path d="M440 441A12 12 0 0 1 440 465Z" fill="url(#fan)" stroke="#12eefc" stroke-width="0.8"/><path d="M440 441A12 12 0 0 1 440 465" fill="none" stroke="#ff2626" stroke-width="1.5"/><path d="M519 441A12 12 0 0 0 519 465Z" fill="url(#fan)" stroke="#12eefc" stroke-width="0.8"/><path d="M519 441A12 12 0 0 0 519 465" fill="none" stroke="#ff2626" stroke-width="1.5"/><path d="M744 441A12 12 0 0 1 744 465Z" fill="url(#fan)" stroke="#12eefc" stroke-width="0.8"/><path d="M744 441A12 12 0 0 1 744 465" fill="none" stroke="#ff2626" stroke-width="1.5"/><path d="M783 441A12 12 0 0 0 783 465Z" fill="url(#fan)" stroke="#12eefc" stroke-width="0.8"/><path d="M783 441A12 12 0 0 0 783 465" fill="none" stroke="#ff2626" stroke-width="1.5"/><path d="M1029 441A12 12 0 0 1 1029 465Z" fill="url(#fan)" stroke="#12eefc" stroke-width="0.8"/><path d="M1029 441A12 12 0 0 1 1029 465" fill="none" stroke="#ff2626" stroke-width="1.5"/><rect x="423.4" y="453.8" width="14.3" height="18.2" fill="none" stroke="#ff2626" stroke-width="1.3"/><path d="M425.4 470V460Q434.7 460 435.7 470" fill="none" stroke="#b0b0b0" stroke-width="1.1"/><rect x="520.6" y="453.8" width="15.7" height="18.2" fill="none" stroke="#ff2626" stroke-width="1.3"/><path d="M522.6 470V460Q533.3 460 534.3 470" fill="none" stroke="#b0b0b0" stroke-width="1.1"/><rect x="725.8" y="453.8" width="14.9" height="18.2" fill="none" stroke="#ff2626" stroke-width="1.3"/><path d="M727.8 470V460Q737.7 460 738.7 470" fill="none" stroke="#b0b0b0" stroke-width="1.1"/><rect x="785.6" y="453.8" width="14.9" height="18.2" fill="none" stroke="#ff2626" stroke-width="1.3"/><path d="M787.6 470V460Q797.5 460 798.5 470" fill="none" stroke="#b0b0b0" stroke-width="1.1"/><rect x="1011.0" y="453.8" width="17.8" height="18.2" fill="none" stroke="#ff2626" stroke-width="1.3"/><path d="M1013 470V460Q1025.8 460 1026.8 470" fill="none" stroke="#b0b0b0" stroke-width="1.1"/><rect x="410.0" y="480.7" width="20.0" height="6.8" fill="#eeee00"/><rect x="532.9" y="485.0" width="21.7" height="7.0" fill="#eeee00"/><rect x="704.0" y="478.0" width="21.0" height="6.0" fill="#eeee00"/><rect x="803.3" y="478.0" width="21.0" height="6.0" fill="#eeee00"/><rect x="954.0" y="478.0" width="21.8" height="6.0" fill="#eeee00"/><rect x="429.0" y="480.0" width="10.0" height="3.0" fill="#ff2626"/><rect x="522.0" y="480.0" width="10.0" height="3.0" fill="#ff2626"/><rect x="732.0" y="481.0" width="10.0" height="3.0" fill="#ff2626"/><rect x="790.0" y="481.0" width="10.0" height="3.0" fill="#ff2626"/><rect x="1016.0" y="483.0" width="10.0" height="3.0" fill="#ff2626"/><rect x="627.5" y="450.0" width="9.0" height="7.0" fill="none" stroke="#f02cf0" stroke-width="1.2"/><rect x="628.5" y="451.0" width="7.0" height="5.0" fill="#f0c0f0"/><path d="M628 457Q632 478 636 457" fill="none" stroke="#ff2626" stroke-width="1.3"/><rect x="888.5" y="450.0" width="9.0" height="7.0" fill="none" stroke="#f02cf0" stroke-width="1.2"/><rect x="889.5" y="451.0" width="7.0" height="5.0" fill="#f0c0f0"/><path d="M889 457Q893 478 897 457" fill="none" stroke="#ff2626" stroke-width="1.3"/><path d="M293.5 455.0L293.5 496.0" stroke="#ff2626" stroke-width="1.2"/><circle cx="293.5" cy="501.1" r="5" fill="#fff" stroke="#22e622" stroke-width="1.4"/><text x="293.5" y="503.1" font-size="5.5" fill="#eeee00" text-anchor="middle" font-weight="bold">30</text><path d="M359.3 455.0L359.3 496.0" stroke="#ff2626" stroke-width="1.2"/><circle cx="359.3" cy="501.1" r="5" fill="#fff" stroke="#22e622" stroke-width="1.4"/><text x="359.3" y="503.1" font-size="5.5" fill="#eeee00" text-anchor="middle" font-weight="bold">31</text><path d="M498.8 455.0L498.8 496.0" stroke="#ff2626" stroke-width="1.2"/><circle cx="498.8" cy="501.1" r="5" fill="#fff" stroke="#22e622" stroke-width="1.4"/><text x="498.8" y="503.1" font-size="5.5" fill="#eeee00" text-anchor="middle" font-weight="bold">32</text><path d="M632.0 455.0L632.0 496.0" stroke="#ff2626" stroke-width="1.2"/><circle cx="632.0" cy="501.1" r="5" fill="#fff" stroke="#22e622" stroke-width="1.4"/><text x="632.0" y="503.1" font-size="5.5" fill="#eeee00" text-anchor="middle" font-weight="bold">33</text><path d="M762.7 455.0L762.7 496.0" stroke="#ff2626" stroke-width="1.2"/><circle cx="762.7" cy="501.1" r="5" fill="#fff" stroke="#22e622" stroke-width="1.4"/><text x="762.7" y="503.1" font-size="5.5" fill="#eeee00" text-anchor="middle" font-weight="bold">34</text><path d="M893.6 455.0L893.6 496.0" stroke="#ff2626" stroke-width="1.2"/><circle cx="893.6" cy="501.1" r="5" fill="#fff" stroke="#22e622" stroke-width="1.4"/><text x="893.6" y="503.1" font-size="5.5" fill="#eeee00" text-anchor="middle" font-weight="bold">35</text><path d="M1029.3 455.0L1029.3 496.0" stroke="#ff2626" stroke-width="1.2"/><circle cx="1029.3" cy="501.1" r="5" fill="#fff" stroke="#22e622" stroke-width="1.4"/><text x="1029.3" y="503.1" font-size="5.5" fill="#eeee00" text-anchor="middle" font-weight="bold">36</text><path d="M322.3 458.0L322.3 512.0" stroke="#ff2626" stroke-width="1.2"/><path d="M322.3 499.1L314.3 505.6L322.3 512.1Z" fill="#fff" stroke="#ff2626" stroke-width="1.7" stroke-linejoin="miter"/><circle cx="323.1" cy="505.6" r="4.6" fill="none" stroke="#ff2626" stroke-width="1.3"/><path d="M322.3 499.1V512.1" stroke="#ff2626" stroke-width="1.2"/><rect x="319.3" y="504.4" width="3" height="2.4" fill="#eeee00"/><path d="M337.3 458.0L337.3 512.0" stroke="#ff2626" stroke-width="1.2"/><path d="M337.3 499.1L345.3 505.6L337.3 512.1Z" fill="#fff" stroke="#ff2626" stroke-width="1.7" stroke-linejoin="miter"/><circle cx="336.5" cy="505.6" r="4.6" fill="none" stroke="#ff2626" stroke-width="1.3"/><path d="M337.3 499.1V512.1" stroke="#ff2626" stroke-width="1.2"/><rect x="337.3" y="504.4" width="3" height="2.4" fill="#eeee00"/><path d="M420.2 458.0L420.2 512.0" stroke="#ff2626" stroke-width="1.2"/><path d="M420.2 499.1L412.2 505.6L420.2 512.1Z" fill="#fff" stroke="#ff2626" stroke-width="1.7" stroke-linejoin="miter"/><circle cx="421.0" cy="505.6" r="4.6" fill="none" stroke="#ff2626" stroke-width="1.3"/><path d="M420.2 499.1V512.1" stroke="#ff2626" stroke-width="1.2"/><rect x="417.2" y="504.4" width="3" height="2.4" fill="#eeee00"/><path d="M435.0 458.0L435.0 512.0" stroke="#ff2626" stroke-width="1.2"/><path d="M435.0 499.1L443.0 505.6L435.0 512.1Z" fill="#fff" stroke="#ff2626" stroke-width="1.7" stroke-linejoin="miter"/><circle cx="434.2" cy="505.6" r="4.6" fill="none" stroke="#ff2626" stroke-width="1.3"/><path d="M435.0 499.1V512.1" stroke="#ff2626" stroke-width="1.2"/><rect x="435.0" y="504.4" width="3" height="2.4" fill="#eeee00"/><path d="M531.5 458.0L531.5 512.0" stroke="#ff2626" stroke-width="1.2"/><path d="M531.5 499.1L523.5 505.6L531.5 512.1Z" fill="#fff" stroke="#ff2626" stroke-width="1.7" stroke-linejoin="miter"/><circle cx="532.3" cy="505.6" r="4.6" fill="none" stroke="#ff2626" stroke-width="1.3"/><path d="M531.5 499.1V512.1" stroke="#ff2626" stroke-width="1.2"/><rect x="528.5" y="504.4" width="3" height="2.4" fill="#eeee00"/><path d="M556.0 458.0L556.0 512.0" stroke="#ff2626" stroke-width="1.2"/><path d="M556.0 499.1L564.0 505.6L556.0 512.1Z" fill="#fff" stroke="#ff2626" stroke-width="1.7" stroke-linejoin="miter"/><circle cx="555.2" cy="505.6" r="4.6" fill="none" stroke="#ff2626" stroke-width="1.3"/><path d="M556.0 499.1V512.1" stroke="#ff2626" stroke-width="1.2"/><rect x="556.0" y="504.4" width="3" height="2.4" fill="#eeee00"/><path d="M711.5 458.0L711.5 512.0" stroke="#ff2626" stroke-width="1.2"/><path d="M711.5 499.1L703.5 505.6L711.5 512.1Z" fill="#fff" stroke="#ff2626" stroke-width="1.7" stroke-linejoin="miter"/><circle cx="712.3" cy="505.6" r="4.6" fill="none" stroke="#ff2626" stroke-width="1.3"/><path d="M711.5 499.1V512.1" stroke="#ff2626" stroke-width="1.2"/><rect x="708.5" y="504.4" width="3" height="2.4" fill="#eeee00"/><path d="M736.2 458.0L736.2 512.0" stroke="#ff2626" stroke-width="1.2"/><path d="M736.2 499.1L744.2 505.6L736.2 512.1Z" fill="#fff" stroke="#ff2626" stroke-width="1.7" stroke-linejoin="miter"/><circle cx="735.4" cy="505.6" r="4.6" fill="none" stroke="#ff2626" stroke-width="1.3"/><path d="M736.2 499.1V512.1" stroke="#ff2626" stroke-width="1.2"/><rect x="736.2" y="504.4" width="3" height="2.4" fill="#eeee00"/><path d="M789.7 458.0L789.7 512.0" stroke="#ff2626" stroke-width="1.2"/><path d="M789.7 499.1L781.7 505.6L789.7 512.1Z" fill="#fff" stroke="#ff2626" stroke-width="1.7" stroke-linejoin="miter"/><circle cx="790.5" cy="505.6" r="4.6" fill="none" stroke="#ff2626" stroke-width="1.3"/><path d="M789.7 499.1V512.1" stroke="#ff2626" stroke-width="1.2"/><rect x="786.7" y="504.4" width="3" height="2.4" fill="#eeee00"/><path d="M814.4 458.0L814.4 512.0" stroke="#ff2626" stroke-width="1.2"/><path d="M814.4 499.1L822.4 505.6L814.4 512.1Z" fill="#fff" stroke="#ff2626" stroke-width="1.7" stroke-linejoin="miter"/><circle cx="813.6" cy="505.6" r="4.6" fill="none" stroke="#ff2626" stroke-width="1.3"/><path d="M814.4 499.1V512.1" stroke="#ff2626" stroke-width="1.2"/><rect x="814.4" y="504.4" width="3" height="2.4" fill="#eeee00"/><path d="M967.3 458.0L967.3 512.0" stroke="#ff2626" stroke-width="1.2"/><path d="M967.3 499.1L959.3 505.6L967.3 512.1Z" fill="#fff" stroke="#ff2626" stroke-width="1.7" stroke-linejoin="miter"/><circle cx="968.1" cy="505.6" r="4.6" fill="none" stroke="#ff2626" stroke-width="1.3"/><path d="M967.3 499.1V512.1" stroke="#ff2626" stroke-width="1.2"/><rect x="964.3" y="504.4" width="3" height="2.4" fill="#eeee00"/><path d="M1056.4 420.0L1056.4 496.0" stroke="#ff2626" stroke-width="1.2" stroke-dasharray="10 3 2 3"/><path d="M1029.5 420.0L1029.5 496.0" stroke="#ff2626" stroke-width="1.2"/><path d="M1070.7 422L1065.5 466M1073.8 422L1068.7 466" fill="none" stroke="#2424ff" stroke-width="1.2"/><path d="M1121 422L1115 475M1124 422L1118 475" fill="none" stroke="#22e622" stroke-width="1.2"/><rect x="1117.0" y="434.0" width="5.0" height="8.0" fill="none" stroke="#22e622" stroke-width="1"/><rect x="1113.0" y="466.0" width="7.0" height="7.0" fill="none" stroke="#22e622" stroke-width="1"/><path d="M1120 422L1110 496M1127 422L1117 496M1135 422L1128 496M1140 430L1132 496" fill="none" stroke="#ff2626" stroke-width="1.1"/><circle cx="1044.4" cy="495" r="12" fill="none" stroke="#eeee00" stroke-width="1.2"/><circle cx="1081" cy="502.5" r="12" fill="none" stroke="#eeee00" stroke-width="1.2"/><rect x="1042.0" y="492.0" width="5.0" height="6.0" fill="#eeee00"/><rect x="1078.5" y="499.5" width="5.0" height="5.5" fill="#eeee00"/><text x="321.0" y="530.0" font-size="8.5" fill="#eeee00" font-weight="normal" text-anchor="start" textLength="156" lengthAdjust="spacing" stroke="#eeee00" stroke-width="0.3">REFERENCE PLAN - LEVEL -1</text><path d="M261.7 570.1L261.7 745.0" stroke="#ff2626" stroke-width="1.3" stroke-dasharray="22 2.5 2 2.5"/><circle cx="261.7" cy="564.6" r="5.3" fill="#fff" stroke="#22e622" stroke-width="1.4"/><text x="261.7" y="566.6" font-size="5.5" fill="#eeee00" text-anchor="middle" font-weight="bold">W</text><path d="M304.4 570.1L304.4 745.0" stroke="#ff2626" stroke-width="1.3" stroke-dasharray="22 2.5 2 2.5"/><circle cx="304.4" cy="564.6" r="5.3" fill="#fff" stroke="#22e622" stroke-width="1.4"/><text x="304.4" y="566.6" font-size="5.5" fill="#eeee00" text-anchor="middle" font-weight="bold">Y</text><path d="M419.0 570.1L419.0 745.0" stroke="#ff2626" stroke-width="1.3" stroke-dasharray="22 2.5 2 2.5"/><circle cx="419.0" cy="564.6" r="5.3" fill="#fff" stroke="#22e622" stroke-width="1.4"/><text x="419.0" y="566.6" font-size="5.5" fill="#eeee00" text-anchor="middle" font-weight="bold">W</text><path d="M461.4 570.1L461.4 745.0" stroke="#ff2626" stroke-width="1.3" stroke-dasharray="22 2.5 2 2.5"/><circle cx="461.4" cy="564.6" r="5.3" fill="#fff" stroke="#22e622" stroke-width="1.4"/><text x="461.4" y="566.6" font-size="5.5" fill="#eeee00" text-anchor="middle" font-weight="bold">Y</text><path d="M544.5 570.1L544.5 745.0" stroke="#ff2626" stroke-width="1.3" stroke-dasharray="22 2.5 2 2.5"/><circle cx="544.5" cy="564.6" r="5.3" fill="#fff" stroke="#22e622" stroke-width="1.4"/><text x="544.5" y="566.6" font-size="5.5" fill="#eeee00" text-anchor="middle" font-weight="bold">W</text><path d="M586.7 570.1L586.7 745.0" stroke="#ff2626" stroke-width="1.3" stroke-dasharray="22 2.5 2 2.5"/><circle cx="586.7" cy="564.6" r="5.3" fill="#fff" stroke="#22e622" stroke-width="1.4"/><text x="586.7" y="566.6" font-size="5.5" fill="#eeee00" text-anchor="middle" font-weight="bold">Y</text><path d="M701.7 570.1L701.7 745.0" stroke="#ff2626" stroke-width="1.3" stroke-dasharray="22 2.5 2 2.5"/><circle cx="701.7" cy="564.6" r="5.3" fill="#fff" stroke="#22e622" stroke-width="1.4"/><text x="701.7" y="566.6" font-size="5.5" fill="#eeee00" text-anchor="middle" font-weight="bold">W</text><path d="M744.0 570.1L744.0 745.0" stroke="#ff2626" stroke-width="1.3" stroke-dasharray="22 2.5 2 2.5"/><circle cx="744.0" cy="564.6" r="5.3" fill="#fff" stroke="#22e622" stroke-width="1.4"/><text x="744.0" y="566.6" font-size="5.5" fill="#eeee00" text-anchor="middle" font-weight="bold">Y</text><path d="M826.3 570.1L826.3 745.0" stroke="#ff2626" stroke-width="1.3" stroke-dasharray="22 2.5 2 2.5"/><circle cx="826.3" cy="564.6" r="5.3" fill="#fff" stroke="#22e622" stroke-width="1.4"/><text x="826.3" y="566.6" font-size="5.5" fill="#eeee00" text-anchor="middle" font-weight="bold">W</text><path d="M869.1 570.1L869.1 745.0" stroke="#ff2626" stroke-width="1.3" stroke-dasharray="22 2.5 2 2.5"/><circle cx="869.1" cy="564.6" r="5.3" fill="#fff" stroke="#22e622" stroke-width="1.4"/><text x="869.1" y="566.6" font-size="5.5" fill="#eeee00" text-anchor="middle" font-weight="bold">Y</text><path d="M984.2 570.1L984.2 745.0" stroke="#ff2626" stroke-width="1.3" stroke-dasharray="22 2.5 2 2.5"/><circle cx="984.2" cy="564.6" r="5.3" fill="#fff" stroke="#22e622" stroke-width="1.4"/><text x="984.2" y="566.6" font-size="5.5" fill="#eeee00" text-anchor="middle" font-weight="bold">W</text><path d="M1026.2 570.1L1026.2 745.0" stroke="#ff2626" stroke-width="1.3" stroke-dasharray="22 2.5 2 2.5"/><circle cx="1026.2" cy="564.6" r="5.3" fill="#fff" stroke="#22e622" stroke-width="1.4"/><text x="1026.2" y="566.6" font-size="5.5" fill="#eeee00" text-anchor="middle" font-weight="bold">Y</text><path d="M1109.4 570.1L1109.4 745.0" stroke="#ff2626" stroke-width="1.3" stroke-dasharray="22 2.5 2 2.5"/><circle cx="1109.4" cy="564.6" r="5.3" fill="#fff" stroke="#22e622" stroke-width="1.4"/><text x="1109.4" y="566.6" font-size="5.5" fill="#eeee00" text-anchor="middle" font-weight="bold">W</text><path d="M1151.4 570.1L1151.4 745.0" stroke="#ff2626" stroke-width="1.3" stroke-dasharray="22 2.5 2 2.5"/><circle cx="1151.4" cy="564.6" r="5.3" fill="#fff" stroke="#22e622" stroke-width="1.4"/><text x="1151.4" y="566.6" font-size="5.5" fill="#eeee00" text-anchor="middle" font-weight="bold">Y</text><path d="M218 668.3H1190" fill="none" stroke="#ff2626" stroke-width="1.6" stroke-dasharray="20 3 3 3"/><path d="M222 715.4H1190" fill="none" stroke="#ff2626" stroke-width="1.3" stroke-dasharray="20 3 3 3"/><path d="M222 720.2H1190" fill="none" stroke="#ff2626" stroke-width="1.3" stroke-dasharray="20 3 3 3"/><path d="M301.2 583.3L301.2 715.4" stroke="#f02cf0" stroke-width="1.4"/><rect x="264.5" y="678.0" width="36.7" height="37.0" fill="url(#wall)"/><path d="M268.0 678.0L268.0 715.0" stroke="#b0b0b0" stroke-width="1"/><path d="M276.0 678.0L276.0 715.0" stroke="#b0b0b0" stroke-width="1"/><path d="M284.0 678.0L284.0 715.0" stroke="#b0b0b0" stroke-width="1"/><path d="M257 683V678H264.5V715.4H301.2" fill="none" stroke="#f02cf0" stroke-width="1.3"/><rect x="260.2" y="660.3" width="41" height="16.1" fill="url(#rail)" stroke="#2424ff" stroke-width="1"/><path d="M260.0 677.8L301.5 677.8" stroke="#12eefc" stroke-width="1.6"/><path d="M233.0 682.5L257.0 682.5" stroke="#111" stroke-width="2.4"/><text x="263.0" y="736.5" font-size="8" fill="#f4f400" font-weight="bold" text-anchor="start" textLength="40" lengthAdjust="spacingAndGlyphs" stroke="#f4f400" stroke-width="0.5">SECTION 1</text><path d="M422.4 583.0L422.4 715.4" stroke="#f02cf0" stroke-width="1.4"/><rect x="422.4" y="662.0" width="36.6" height="53.0" fill="url(#wall)"/><path d="M449.0 676.0L449.0 715.0" stroke="#b0b0b0" stroke-width="1"/><path d="M452.0 676.0L452.0 715.0" stroke="#b0b0b0" stroke-width="1"/><path d="M456.0 676.0L456.0 715.0" stroke="#b0b0b0" stroke-width="1"/><path d="M422.4 715.4L459.0 715.4" stroke="#f02cf0" stroke-width="1.4"/><path d="M459.0 676.0L459.0 715.0" stroke="#f02cf0" stroke-width="1.0"/><rect x="441.8" y="602.0" width="10.5" height="57.3" fill="url(#col)"/><rect x="441.8" y="602.0" width="10.5" height="57.3" fill="none" stroke="#eeee00" stroke-width="1.1"/><path d="M422.4 615.6L441.8 618.4" stroke="#ff2626" stroke-width="1.4"/><path d="M439.0 618.0L439.0 660.0" stroke="#eeee00" stroke-width="1.1"/><path d="M422.4 652.7L441.8 652.7" stroke="#ff2626" stroke-width="1.1"/><path d="M422.4 655.5L441.8 655.5" stroke="#ff2626" stroke-width="1.1"/><path d="M422.4 659.3L452.3 659.3" stroke="#12eefc" stroke-width="1.5"/><path d="M422.4 668.0L441.8 668.0" stroke="#eeee00" stroke-width="1.0"/><path d="M422.4 672.0L452.3 672.0" stroke="#b0b0b0" stroke-width="1.0"/><path d="M452.3 647Q464.6 649 464.6 662L465.1 680L459.6 680Q459.6 663 452.3 658Z" fill="url(#rail)" stroke="#2424ff" stroke-width="1.2"/><path d="M452.3 651Q462.6 653 462.6 676" fill="none" stroke="#ff2626" stroke-width="1.0"/><path d="M451.3 662Q458.3 668 457.3 680L466.6 681" fill="none" stroke="#12eefc" stroke-width="1.6"/><path d="M466.5 682.5L490.3 682.5" stroke="#111" stroke-width="2.4"/><rect x="422.8" y="685.4" width="13.9" height="30.0" fill="none" stroke="#ff2626" stroke-width="1.4"/><path d="M422.8 685.4L436.7 700L422.8 715" fill="none" stroke="#ff2626" stroke-width="1.0"/><rect x="423.8" y="696.0" width="18.9" height="3.0" fill="#eeee00"/><text x="420.0" y="736.5" font-size="8" fill="#f4f400" font-weight="bold" text-anchor="start" textLength="41.39999999999998" lengthAdjust="spacingAndGlyphs" stroke="#f4f400" stroke-width="0.5">SECTION 2</text><path d="M583.3 583.0L583.3 715.4" stroke="#f02cf0" stroke-width="1.4"/><rect x="546.7" y="662.0" width="36.6" height="53.0" fill="url(#wall)"/><path d="M556.7 676.0L556.7 715.0" stroke="#b0b0b0" stroke-width="1"/><path d="M553.7 676.0L553.7 715.0" stroke="#b0b0b0" stroke-width="1"/><path d="M549.7 676.0L549.7 715.0" stroke="#b0b0b0" stroke-width="1"/><path d="M546.7 715.4L583.3 715.4" stroke="#f02cf0" stroke-width="1.4"/><path d="M546.7 676.0L546.7 715.0" stroke="#f02cf0" stroke-width="1.0"/><rect x="553.4" y="602.0" width="10.5" height="57.3" fill="url(#col)"/><rect x="553.4" y="602.0" width="10.5" height="57.3" fill="none" stroke="#eeee00" stroke-width="1.1"/><path d="M583.3 615.6L563.9 618.4" stroke="#ff2626" stroke-width="1.4"/><path d="M566.7 618.0L566.7 660.0" stroke="#eeee00" stroke-width="1.1"/><path d="M583.3 652.7L563.9 652.7" stroke="#ff2626" stroke-width="1.1"/><path d="M583.3 655.5L563.9 655.5" stroke="#ff2626" stroke-width="1.1"/><path d="M583.3 659.3L553.4 659.3" stroke="#12eefc" stroke-width="1.5"/><path d="M583.3 668.0L563.9 668.0" stroke="#eeee00" stroke-width="1.0"/><path d="M583.3 672.0L553.4 672.0" stroke="#b0b0b0" stroke-width="1.0"/><path d="M553.4000000000001 647Q541.1 649 541.1 662L540.6 680L546.1 680Q546.1 663 553.4000000000001 658Z" fill="url(#rail)" stroke="#2424ff" stroke-width="1.2"/><path d="M553.4000000000001 651Q543.1 653 543.1 676" fill="none" stroke="#ff2626" stroke-width="1.0"/><path d="M554.4000000000001 662Q547.4000000000001 668 548.4000000000001 680L539.1 681" fill="none" stroke="#12eefc" stroke-width="1.6"/><path d="M539.2 682.5L515.4 682.5" stroke="#111" stroke-width="2.4"/><rect x="569.0" y="685.4" width="13.9" height="30.0" fill="none" stroke="#ff2626" stroke-width="1.4"/><path d="M582.9000000000001 685.4L569.0 700L582.9000000000001 715" fill="none" stroke="#ff2626" stroke-width="1.0"/><rect x="570.0" y="696.0" width="18.9" height="3.0" fill="#eeee00"/><text x="545.5" y="736.5" font-size="8" fill="#f4f400" font-weight="bold" text-anchor="start" textLength="41.200000000000045" lengthAdjust="spacingAndGlyphs" stroke="#f4f400" stroke-width="0.5">SECTION 3</text><path d="M705.1 583.0L705.1 715.4" stroke="#f02cf0" stroke-width="1.4"/><rect x="705.1" y="662.0" width="36.6" height="53.0" fill="url(#wall)"/><path d="M731.7 676.0L731.7 715.0" stroke="#b0b0b0" stroke-width="1"/><path d="M734.7 676.0L734.7 715.0" stroke="#b0b0b0" stroke-width="1"/><path d="M738.7 676.0L738.7 715.0" stroke="#b0b0b0" stroke-width="1"/><path d="M705.1 715.4L741.7 715.4" stroke="#f02cf0" stroke-width="1.4"/><path d="M741.7 676.0L741.7 715.0" stroke="#f02cf0" stroke-width="1.0"/><rect x="724.5" y="602.0" width="10.5" height="57.3" fill="url(#col)"/><rect x="724.5" y="602.0" width="10.5" height="57.3" fill="none" stroke="#eeee00" stroke-width="1.1"/><path d="M705.1 615.6L724.5 618.4" stroke="#ff2626" stroke-width="1.4"/><path d="M721.7 618.0L721.7 660.0" stroke="#eeee00" stroke-width="1.1"/><path d="M705.1 652.7L724.5 652.7" stroke="#ff2626" stroke-width="1.1"/><path d="M705.1 655.5L724.5 655.5" stroke="#ff2626" stroke-width="1.1"/><path d="M705.1 659.3L735.0 659.3" stroke="#12eefc" stroke-width="1.5"/><path d="M705.1 668.0L724.5 668.0" stroke="#eeee00" stroke-width="1.0"/><path d="M705.1 672.0L735.0 672.0" stroke="#b0b0b0" stroke-width="1.0"/><path d="M735.0 647Q747.3000000000001 649 747.3000000000001 662L747.8000000000001 680L742.3000000000001 680Q742.3000000000001 663 735.0 658Z" fill="url(#rail)" stroke="#2424ff" stroke-width="1.2"/><path d="M735.0 651Q745.3000000000001 653 745.3000000000001 676" fill="none" stroke="#ff2626" stroke-width="1.0"/><path d="M734.0 662Q741.0 668 740.0 680L749.3000000000001 681" fill="none" stroke="#12eefc" stroke-width="1.6"/><path d="M749.2 682.5L773.0 682.5" stroke="#111" stroke-width="2.4"/><rect x="705.5" y="681.6" width="13.9" height="23.1" fill="none" stroke="#12eefc" stroke-width="1.5"/><rect x="707.5" y="683.0" width="9.9" height="20.0" fill="none" stroke="#ff2626" stroke-width="1.3"/><path d="M712.45 683 " fill="none" stroke="#ff2626" stroke-width="1"/><path d="M712.5 683.0L712.5 703.0" stroke="#ff2626" stroke-width="1.4"/><rect x="704.5" y="707.0" width="17.9" height="4.0" fill="#eeee00"/><rect x="704.5" y="707.0" width="17.9" height="4.0" fill="none" stroke="#ff2626" stroke-width="0.8"/><text x="702.7" y="736.5" font-size="8" fill="#f4f400" font-weight="bold" text-anchor="start" textLength="41.299999999999955" lengthAdjust="spacingAndGlyphs" stroke="#f4f400" stroke-width="0.5">SECTION 4</text><path d="M865.7 583.0L865.7 715.4" stroke="#f02cf0" stroke-width="1.4"/><rect x="829.1" y="662.0" width="36.6" height="53.0" fill="url(#wall)"/><path d="M839.1 676.0L839.1 715.0" stroke="#b0b0b0" stroke-width="1"/><path d="M836.1 676.0L836.1 715.0" stroke="#b0b0b0" stroke-width="1"/><path d="M832.1 676.0L832.1 715.0" stroke="#b0b0b0" stroke-width="1"/><path d="M829.1 715.4L865.7 715.4" stroke="#f02cf0" stroke-width="1.4"/><path d="M829.1 676.0L829.1 715.0" stroke="#f02cf0" stroke-width="1.0"/><rect x="835.8" y="602.0" width="10.5" height="57.3" fill="url(#col)"/><rect x="835.8" y="602.0" width="10.5" height="57.3" fill="none" stroke="#eeee00" stroke-width="1.1"/><path d="M865.7 615.6L846.3 618.4" stroke="#ff2626" stroke-width="1.4"/><path d="M849.1 618.0L849.1 660.0" stroke="#eeee00" stroke-width="1.1"/><path d="M865.7 652.7L846.3 652.7" stroke="#ff2626" stroke-width="1.1"/><path d="M865.7 655.5L846.3 655.5" stroke="#ff2626" stroke-width="1.1"/><path d="M865.7 659.3L835.8 659.3" stroke="#12eefc" stroke-width="1.5"/><path d="M865.7 668.0L846.3 668.0" stroke="#eeee00" stroke-width="1.0"/><path d="M865.7 672.0L835.8 672.0" stroke="#b0b0b0" stroke-width="1.0"/><path d="M835.8000000000002 647Q823.5000000000001 649 823.5000000000001 662L823.0000000000001 680L828.5000000000001 680Q828.5000000000001 663 835.8000000000002 658Z" fill="url(#rail)" stroke="#2424ff" stroke-width="1.2"/><path d="M835.8000000000002 651Q825.5000000000001 653 825.5000000000001 676" fill="none" stroke="#ff2626" stroke-width="1.0"/><path d="M836.8000000000002 662Q829.8000000000002 668 830.8000000000002 680L821.5000000000001 681" fill="none" stroke="#12eefc" stroke-width="1.6"/><path d="M821.6 684.5L797.8 684.5" stroke="#111" stroke-width="2.4"/><text x="827.3" y="736.5" font-size="8" fill="#f4f400" font-weight="bold" text-anchor="start" textLength="41.80000000000007" lengthAdjust="spacingAndGlyphs" stroke="#f4f400" stroke-width="0.5">SECTION 5</text><path d="M987.6 583.0L987.6 715.4" stroke="#f02cf0" stroke-width="1.4"/><rect x="987.6" y="662.0" width="36.6" height="53.0" fill="url(#wall)"/><path d="M1014.2 676.0L1014.2 715.0" stroke="#b0b0b0" stroke-width="1"/><path d="M1017.2 676.0L1017.2 715.0" stroke="#b0b0b0" stroke-width="1"/><path d="M1021.2 676.0L1021.2 715.0" stroke="#b0b0b0" stroke-width="1"/><path d="M987.6 715.4L1024.2 715.4" stroke="#f02cf0" stroke-width="1.4"/><path d="M1024.2 676.0L1024.2 715.0" stroke="#f02cf0" stroke-width="1.0"/><rect x="1007.0" y="602.0" width="10.5" height="57.3" fill="url(#col)"/><rect x="1007.0" y="602.0" width="10.5" height="57.3" fill="none" stroke="#eeee00" stroke-width="1.1"/><path d="M987.6 615.6L1007.0 618.4" stroke="#ff2626" stroke-width="1.4"/><path d="M1004.2 618.0L1004.2 660.0" stroke="#eeee00" stroke-width="1.1"/><path d="M987.6 652.7L1007.0 652.7" stroke="#ff2626" stroke-width="1.1"/><path d="M987.6 655.5L1007.0 655.5" stroke="#ff2626" stroke-width="1.1"/><path d="M987.6 659.3L1017.5 659.3" stroke="#12eefc" stroke-width="1.5"/><path d="M987.6 668.0L1007.0 668.0" stroke="#eeee00" stroke-width="1.0"/><path d="M987.6 672.0L1017.5 672.0" stroke="#b0b0b0" stroke-width="1.0"/><path d="M1017.5 647Q1029.8 649 1029.8 662L1030.3 680L1024.8 680Q1024.8 663 1017.5 658Z" fill="url(#rail)" stroke="#2424ff" stroke-width="1.2"/><path d="M1017.5 651Q1027.8 653 1027.8 676" fill="none" stroke="#ff2626" stroke-width="1.0"/><path d="M1016.5 662Q1023.5 668 1022.5 680L1031.8 681" fill="none" stroke="#12eefc" stroke-width="1.6"/><path d="M1031.7 685.0L1055.5 685.0" stroke="#111" stroke-width="2.4"/><rect x="988.0" y="685.4" width="13.9" height="30.0" fill="none" stroke="#ff2626" stroke-width="1.4"/><path d="M988.0 685.4L1001.9000000000001 700L988.0 715" fill="none" stroke="#ff2626" stroke-width="1.0"/><rect x="989.0" y="696.0" width="18.9" height="3.0" fill="#eeee00"/><text x="985.2" y="736.5" font-size="8" fill="#f4f400" font-weight="bold" text-anchor="start" textLength="41.0" lengthAdjust="spacingAndGlyphs" stroke="#f4f400" stroke-width="0.5">SECTION 6</text><path d="M1148.0 583.0L1148.0 715.4" stroke="#f02cf0" stroke-width="1.4"/><rect x="1111.4" y="662.0" width="36.6" height="53.0" fill="url(#wall)"/><path d="M1121.4 676.0L1121.4 715.0" stroke="#b0b0b0" stroke-width="1"/><path d="M1118.4 676.0L1118.4 715.0" stroke="#b0b0b0" stroke-width="1"/><path d="M1114.4 676.0L1114.4 715.0" stroke="#b0b0b0" stroke-width="1"/><path d="M1111.4 715.4L1148.0 715.4" stroke="#f02cf0" stroke-width="1.4"/><path d="M1111.4 676.0L1111.4 715.0" stroke="#f02cf0" stroke-width="1.0"/><rect x="1118.1" y="602.0" width="10.5" height="57.3" fill="url(#col)"/><rect x="1118.1" y="602.0" width="10.5" height="57.3" fill="none" stroke="#eeee00" stroke-width="1.1"/><path d="M1148.0 615.6L1128.6 618.4" stroke="#ff2626" stroke-width="1.4"/><path d="M1131.4 618.0L1131.4 660.0" stroke="#eeee00" stroke-width="1.1"/><path d="M1148.0 652.7L1128.6 652.7" stroke="#ff2626" stroke-width="1.1"/><path d="M1148.0 655.5L1128.6 655.5" stroke="#ff2626" stroke-width="1.1"/><path d="M1148.0 659.3L1118.1 659.3" stroke="#12eefc" stroke-width="1.5"/><path d="M1148.0 668.0L1128.6 668.0" stroke="#eeee00" stroke-width="1.0"/><path d="M1148.0 672.0L1118.1 672.0" stroke="#b0b0b0" stroke-width="1.0"/><path d="M1118.1000000000001 647Q1105.8000000000002 649 1105.8000000000002 662L1105.3000000000002 680L1110.8000000000002 680Q1110.8000000000002 663 1118.1000000000001 658Z" fill="url(#rail)" stroke="#2424ff" stroke-width="1.2"/><path d="M1118.1000000000001 651Q1107.8000000000002 653 1107.8000000000002 676" fill="none" stroke="#ff2626" stroke-width="1.0"/><path d="M1119.1000000000001 662Q1112.1000000000001 668 1113.1000000000001 680L1103.8000000000002 681" fill="none" stroke="#12eefc" stroke-width="1.6"/><path d="M1103.9 688.0L1080.1 688.0" stroke="#111" stroke-width="2.4"/><rect x="1133.7" y="685.4" width="13.9" height="30.0" fill="none" stroke="#ff2626" stroke-width="1.4"/><path d="M1147.6000000000001 685.4L1133.7 700L1147.6000000000001 715" fill="none" stroke="#ff2626" stroke-width="1.0"/><rect x="1134.7" y="696.0" width="18.9" height="3.0" fill="#eeee00"/><text x="1110.4" y="736.5" font-size="8" fill="#f4f400" font-weight="bold" text-anchor="start" textLength="41.0" lengthAdjust="spacingAndGlyphs" stroke="#f4f400" stroke-width="0.5">SECTION 7</text><text x="165.0" y="667.0" font-size="4.5" fill="#eeee00" font-weight="normal" text-anchor="start" textLength="57" lengthAdjust="spacingAndGlyphs">FFL +34.090 LEVEL -01</text><path d="M184.0 669.5L222.0 669.5" stroke="#eeee00" stroke-width="1"/><text x="184.0" y="677.0" font-size="4.2" fill="#eeee00" font-weight="normal" text-anchor="start" textLength="31" lengthAdjust="spacingAndGlyphs">SSL +30.xxx</text><text x="155.0" y="714.0" font-size="4.5" fill="#eeee00" font-weight="normal" text-anchor="start" textLength="67" lengthAdjust="spacingAndGlyphs">+27.750 LEVEL -02  xxxxx</text><path d="M156.0 720.2L222.0 720.2" stroke="#eeee00" stroke-width="1"/><text x="163.0" y="725.0" font-size="4.5" fill="#eeee00" font-weight="normal" text-anchor="start" textLength="59" lengthAdjust="spacingAndGlyphs">SSL +27.795 LEVEL -02</text><text x="890.0" y="714.0" font-size="4.5" fill="#eeee00" font-weight="normal" text-anchor="start" textLength="72" lengthAdjust="spacingAndGlyphs">+27.750 LEVEL -02  xxxxx</text><path d="M890.0 718.5L962.0 718.5" stroke="#eeee00" stroke-width="1"/><text x="900.0" y="723.0" font-size="4.5" fill="#eeee00" font-weight="normal" text-anchor="start" textLength="60" lengthAdjust="spacingAndGlyphs">FFL +27.050 LEVEL -02</text><text x="1190.0" y="714.0" font-size="4.5" fill="#eeee00" font-weight="normal" text-anchor="start"></text><path d="M261.1 786.8L261.1 966.0" stroke="#ff2626" stroke-width="1.3" stroke-dasharray="22 2.5 2 2.5"/><circle cx="261.1" cy="781.3" r="5.3" fill="#fff" stroke="#22e622" stroke-width="1.4"/><text x="261.1" y="783.3" font-size="5.5" fill="#eeee00" text-anchor="middle" font-weight="bold">W</text><path d="M303.3 786.8L303.3 966.0" stroke="#ff2626" stroke-width="1.3" stroke-dasharray="22 2.5 2 2.5"/><circle cx="303.3" cy="781.3" r="5.3" fill="#fff" stroke="#22e622" stroke-width="1.4"/><text x="303.3" y="783.3" font-size="5.5" fill="#eeee00" text-anchor="middle" font-weight="bold">Y</text><path d="M400.5 786.8L400.5 966.0" stroke="#ff2626" stroke-width="1.3" stroke-dasharray="22 2.5 2 2.5"/><circle cx="400.5" cy="781.3" r="5.3" fill="#fff" stroke="#22e622" stroke-width="1.4"/><text x="400.5" y="783.3" font-size="5.5" fill="#eeee00" text-anchor="middle" font-weight="bold">W</text><path d="M443.0 786.8L443.0 966.0" stroke="#ff2626" stroke-width="1.3" stroke-dasharray="22 2.5 2 2.5"/><circle cx="443.0" cy="781.3" r="5.3" fill="#fff" stroke="#22e622" stroke-width="1.4"/><text x="443.0" y="783.3" font-size="5.5" fill="#eeee00" text-anchor="middle" font-weight="bold">Y</text><path d="M558.0 786.8L558.0 966.0" stroke="#ff2626" stroke-width="1.3" stroke-dasharray="22 2.5 2 2.5"/><circle cx="558.0" cy="781.3" r="5.3" fill="#fff" stroke="#22e622" stroke-width="1.4"/><text x="558.0" y="783.3" font-size="5.5" fill="#eeee00" text-anchor="middle" font-weight="bold">W</text><path d="M600.5 786.8L600.5 966.0" stroke="#ff2626" stroke-width="1.3" stroke-dasharray="22 2.5 2 2.5"/><circle cx="600.5" cy="781.3" r="5.3" fill="#fff" stroke="#22e622" stroke-width="1.4"/><text x="600.5" y="783.3" font-size="5.5" fill="#eeee00" text-anchor="middle" font-weight="bold">Y</text><path d="M755.3 786.8L755.3 966.0" stroke="#ff2626" stroke-width="1.3" stroke-dasharray="22 2.5 2 2.5"/><circle cx="755.3" cy="781.3" r="5.3" fill="#fff" stroke="#22e622" stroke-width="1.4"/><text x="755.3" y="783.3" font-size="5.5" fill="#eeee00" text-anchor="middle" font-weight="bold">W</text><path d="M797.9 786.8L797.9 966.0" stroke="#ff2626" stroke-width="1.3" stroke-dasharray="22 2.5 2 2.5"/><circle cx="797.9" cy="781.3" r="5.3" fill="#fff" stroke="#22e622" stroke-width="1.4"/><text x="797.9" y="783.3" font-size="5.5" fill="#eeee00" text-anchor="middle" font-weight="bold">Y</text><path d="M218.5 885.4H900" fill="none" stroke="#ff2626" stroke-width="1.6" stroke-dasharray="20 3 3 3"/><path d="M218.5 933H900" fill="none" stroke="#ff2626" stroke-width="1.3" stroke-dasharray="20 3 3 3"/><path d="M218.5 937H900" fill="none" stroke="#ff2626" stroke-width="1.3" stroke-dasharray="20 3 3 3"/><path d="M300.6 799.5L300.6 931.0" stroke="#f02cf0" stroke-width="1.4"/><rect x="263.9" y="903.2" width="36.7" height="27.8" fill="url(#brick)"/><path d="M263.9 931.0L300.6 931.0" stroke="#f02cf0" stroke-width="1.4"/><path d="M263.9 903.0L263.9 931.0" stroke="#f02cf0" stroke-width="1.2"/><path d="M261.9 903.2L301.6 903.2" stroke="#12eefc" stroke-width="1.8"/><path d="M261.1 888.0L261.1 902.0" stroke="#2424ff" stroke-width="1.6"/><path d="M231.7 906.0L263.9 906.0" stroke="#111" stroke-width="2.4"/><text x="262.1" y="950.5" font-size="7.5" fill="#f4f400" font-weight="bold" text-anchor="start" textLength="41.19999999999999" lengthAdjust="spacingAndGlyphs" stroke="#f4f400" stroke-width="0.5">SECTION 8</text><path d="M403.2 799.5L403.2 931.0" stroke="#f02cf0" stroke-width="1.4"/><rect x="403.2" y="903.2" width="37.0" height="27.8" fill="url(#brick)"/><path d="M403.2 931.0L440.2 931.0" stroke="#f02cf0" stroke-width="1.4"/><path d="M440.2 903.0L440.2 931.0" stroke="#f02cf0" stroke-width="1.2"/><path d="M401.2 903.2L441.2 903.2" stroke="#12eefc" stroke-width="1.8"/><path d="M443.0 888.0L443.0 902.0" stroke="#2424ff" stroke-width="1.6"/><path d="M472.4 906.0L440.2 906.0" stroke="#111" stroke-width="2.4"/><text x="401.5" y="950.5" font-size="7.5" fill="#f4f400" font-weight="bold" text-anchor="start" textLength="41.5" lengthAdjust="spacingAndGlyphs" stroke="#f4f400" stroke-width="0.5">SECTION 9</text><path d="M561.4 799.5L561.4 931.9" stroke="#f02cf0" stroke-width="1.4"/><rect x="561.4" y="878.5" width="36.6" height="53.0" fill="url(#wall)"/><path d="M588.0 892.5L588.0 931.5" stroke="#b0b0b0" stroke-width="1"/><path d="M591.0 892.5L591.0 931.5" stroke="#b0b0b0" stroke-width="1"/><path d="M595.0 892.5L595.0 931.5" stroke="#b0b0b0" stroke-width="1"/><path d="M561.4 931.9L598.0 931.9" stroke="#f02cf0" stroke-width="1.4"/><path d="M598.0 892.5L598.0 931.5" stroke="#f02cf0" stroke-width="1.0"/><rect x="580.8" y="818.5" width="10.5" height="57.3" fill="url(#col)"/><rect x="580.8" y="818.5" width="10.5" height="57.3" fill="none" stroke="#eeee00" stroke-width="1.1"/><path d="M561.4 832.1L580.8 834.9" stroke="#ff2626" stroke-width="1.4"/><path d="M578.0 834.5L578.0 876.5" stroke="#eeee00" stroke-width="1.1"/><path d="M561.4 869.2L580.8 869.2" stroke="#ff2626" stroke-width="1.1"/><path d="M561.4 872.0L580.8 872.0" stroke="#ff2626" stroke-width="1.1"/><path d="M561.4 875.8L591.3 875.8" stroke="#12eefc" stroke-width="1.5"/><path d="M561.4 884.5L580.8 884.5" stroke="#eeee00" stroke-width="1.0"/><path d="M561.4 888.5L591.3 888.5" stroke="#b0b0b0" stroke-width="1.0"/><path d="M591.3 872.5Q603.6 874.5 603.6 887.5L604.1 905.5L598.6 905.5Q598.6 888.5 591.3 883.5Z" fill="url(#rail)" stroke="#2424ff" stroke-width="1.2"/><path d="M591.3 876.5Q601.6 878.5 601.6 901.5" fill="none" stroke="#ff2626" stroke-width="1.0"/><path d="M590.3 887.5Q597.3 893.5 596.3 905.5L605.6 906.5" fill="none" stroke="#12eefc" stroke-width="1.6"/><path d="M605.5 907.0L629.3 907.0" stroke="#111" stroke-width="2.4"/><rect x="561.8" y="901.9" width="13.9" height="30.0" fill="none" stroke="#ff2626" stroke-width="1.4"/><path d="M561.8 901.9L575.7 916.5L561.8 931.5" fill="none" stroke="#ff2626" stroke-width="1.0"/><rect x="562.8" y="912.5" width="18.9" height="3.0" fill="#eeee00"/><text x="559.0" y="953.0" font-size="8" fill="#f4f400" font-weight="bold" text-anchor="start" textLength="41.5" lengthAdjust="spacingAndGlyphs" stroke="#f4f400" stroke-width="0.5">SECTION 10</text><path d="M794.5 799.5L794.5 931.9" stroke="#f02cf0" stroke-width="1.4"/><rect x="757.9" y="878.5" width="36.6" height="53.0" fill="url(#wall)"/><path d="M767.9 892.5L767.9 931.5" stroke="#b0b0b0" stroke-width="1"/><path d="M764.9 892.5L764.9 931.5" stroke="#b0b0b0" stroke-width="1"/><path d="M760.9 892.5L760.9 931.5" stroke="#b0b0b0" stroke-width="1"/><path d="M757.9 931.9L794.5 931.9" stroke="#f02cf0" stroke-width="1.4"/><path d="M757.9 892.5L757.9 931.5" stroke="#f02cf0" stroke-width="1.0"/><rect x="764.6" y="818.5" width="10.5" height="57.3" fill="url(#col)"/><rect x="764.6" y="818.5" width="10.5" height="57.3" fill="none" stroke="#eeee00" stroke-width="1.1"/><path d="M794.5 832.1L775.1 834.9" stroke="#ff2626" stroke-width="1.4"/><path d="M777.9 834.5L777.9 876.5" stroke="#eeee00" stroke-width="1.1"/><path d="M794.5 869.2L775.1 869.2" stroke="#ff2626" stroke-width="1.1"/><path d="M794.5 872.0L775.1 872.0" stroke="#ff2626" stroke-width="1.1"/><path d="M794.5 875.8L764.6 875.8" stroke="#12eefc" stroke-width="1.5"/><path d="M794.5 884.5L775.1 884.5" stroke="#eeee00" stroke-width="1.0"/><path d="M794.5 888.5L764.6 888.5" stroke="#b0b0b0" stroke-width="1.0"/><path d="M764.5999999999999 872.5Q752.2999999999998 874.5 752.2999999999998 887.5L751.7999999999998 905.5L757.2999999999998 905.5Q757.2999999999998 888.5 764.5999999999999 883.5Z" fill="url(#rail)" stroke="#2424ff" stroke-width="1.2"/><path d="M764.5999999999999 876.5Q754.2999999999998 878.5 754.2999999999998 901.5" fill="none" stroke="#ff2626" stroke-width="1.0"/><path d="M765.5999999999999 887.5Q758.5999999999999 893.5 759.5999999999999 905.5L750.2999999999998 906.5" fill="none" stroke="#12eefc" stroke-width="1.6"/><path d="M750.4 911.0L726.6 911.0" stroke="#111" stroke-width="2.4"/><rect x="780.2" y="901.9" width="13.9" height="30.0" fill="none" stroke="#ff2626" stroke-width="1.4"/><path d="M794.0999999999999 901.9L780.1999999999998 916.5L794.0999999999999 931.5" fill="none" stroke="#ff2626" stroke-width="1.0"/><rect x="781.2" y="912.5" width="18.9" height="3.0" fill="#eeee00"/><text x="756.3" y="953.0" font-size="8" fill="#f4f400" font-weight="bold" text-anchor="start" textLength="41.60000000000002" lengthAdjust="spacingAndGlyphs" stroke="#f4f400" stroke-width="0.5">SECTION 11</text><text x="835.0" y="884.0" font-size="4.5" fill="#eeee00" font-weight="normal" text-anchor="start" textLength="58" lengthAdjust="spacingAndGlyphs">FFL +31.090 LEVEL -01</text><path d="M835.0 887.0L893.0 887.0" stroke="#eeee00" stroke-width="1"/><text x="850.0" y="892.0" font-size="4.2" fill="#eeee00" font-weight="normal" text-anchor="start" textLength="40" lengthAdjust="spacingAndGlyphs">SSL +30.xxx</text><text x="835.0" y="937.0" font-size="4.5" fill="#eeee00" font-weight="normal" text-anchor="start" textLength="65" lengthAdjust="spacingAndGlyphs">FFL +27.730 LEVEL -02  xxxxx</text><path d="M835.0 939.5L900.0 939.5" stroke="#eeee00" stroke-width="1"/><text x="840.0" y="945.0" font-size="4.5" fill="#eeee00" font-weight="normal" text-anchor="start" textLength="55" lengthAdjust="spacingAndGlyphs">SSL +27.xxx LEVEL -02</text><text x="467.0" y="932.0" font-size="4.5" fill="#eeee00" font-weight="normal" text-anchor="start" textLength="43" lengthAdjust="spacingAndGlyphs">+27.730 LEVEL -02</text><path d="M467.0 934.5L510.0 934.5" stroke="#eeee00" stroke-width="1"/><text x="477.0" y="940.0" font-size="4.5" fill="#eeee00" font-weight="normal" text-anchor="start" textLength="33" lengthAdjust="spacingAndGlyphs">SSL +27.450 LEVEL</text><path d="M146.5 186.0L146.5 989.0" stroke="#111" stroke-width="1.4"/></svg><!--/DRAWING-->
<!-- UCS -->
<svg style="left:0;top:0" width="1912" height="1026">
  <path d="M22.5 889.5V976.5H72.5Z" fill="none" stroke="#3346ff" stroke-width="1.1"/>
  <path d="M22.5 968.5H30.5V976.5" fill="none" stroke="#3346ff" stroke-width="1.1"/>
  <path d="M24.5 915L30.5 921L36.5 915M30.5 921V928" fill="none" stroke="#3346ff" stroke-width="1.1"/>
  <path d="M50 962L62.5 974.5M62.5 962L50 974.5" fill="none" stroke="#3346ff" stroke-width="1.1"/>
</svg>
<!-- viewport controls -->
<div class="a" style="left:1844px;top:196px;width:12px;height:5px;background:#eee;border:1px solid #444"></div>
<div class="a" style="left:1867px;top:190px;width:9px;height:9px;background:#eee;border:1px solid #444"></div>
<div class="a" style="left:1864px;top:193px;width:9px;height:9px;background:#eee;border:1px solid #444"></div>
<div class="a" style="left:1866.5px;top:195.5px;width:4px;height:4px;background:#777"></div>
<svg style="left:1884px;top:191px" width="11" height="10"><path d="M1.5 1.5L9.5 8.5M9.5 1.5L1.5 8.5" stroke="#444" stroke-width="3.2"/><path d="M1.5 1.5L9.5 8.5M9.5 1.5L1.5 8.5" stroke="#f2f2f2" stroke-width="1.8"/></svg>
<!-- nav bar -->
<div class="a" style="left:1869px;top:440px;width:33px;height:135px;background:#9b9b9b;border:1px solid #7a7a7a;border-radius:4px;box-shadow:0 0 1px #666"></div>
<div class="a" style="left:1871px;top:443px;width:29px;height:8px;background:repeating-linear-gradient(90deg,#8f8f8f 0 1px,#a3a3a3 1px 2px)"></div>
<svg style="left:1869px;top:440px" width="34" height="136">
  <circle cx="25" cy="7" r="3.5" fill="none" stroke="#888" stroke-width="1"/>
  <path d="M23.5 5.5L26.5 8.5M26.5 5.5L23.5 8.5" stroke="#888" stroke-width="0.8"/>
  <path d="M9 36C4 33 5 25 11 23C16 21 20 24 22 27V35H13" fill="none" stroke="#888" stroke-width="1.4"/>
  <circle cx="14" cy="30" r="4.5" fill="none" stroke="#888" stroke-width="1.4"/>
  <text x="13" y="46" font-family="Liberation Sans" font-size="9" font-weight="bold" fill="#888">2D</text>
  <path d="M4 51H30" stroke="#8a8a8a" stroke-width="0.8"/>
  <path d="M8 73C7 68 6 63 9 62L12 66V58C12 56 15 56 15 58V65V56C15 54 18 54 18 56V65V57C18 55 21 55 21 57V66V60C21 58 24 58 24 60V70C24 77 20 80 15 80C11 80 9 77 8 73Z" fill="none" stroke="#888" stroke-width="1.2"/>
  <path d="M4 87L16 99M4 87V92M4 87H9M17 87L5 99M17 87V92M17 87H12M5 99V94M5 99H10" fill="none" stroke="#888" stroke-width="1.2"/>
  <circle cx="21" cy="102" r="5" fill="none" stroke="#888" stroke-width="1.4"/>
  <path d="M24.5 105.5L29 110" stroke="#888" stroke-width="2"/>
  <path d="M13 118H19L16 121Z" fill="#888"/>
  <circle cx="25" cy="129" r="3" fill="none" stroke="#888" stroke-width="0.8"/>
</svg>
<!-- command history -->
<div class="a" style="left:510px;top:908px;width:60px;height:15px;background:rgba(90,90,90,.8);border-radius:2px"></div>
<div class="a" style="left:510px;top:928px;width:256px;height:15px;background:rgba(90,90,90,.8);border-radius:2px"></div>
<div class="a" style="left:510px;top:948px;width:60px;height:15px;background:rgba(90,90,90,.8);border-radius:2px"></div>
<div class="t" style="left:512px;top:908px;font-family:'Liberation Mono',monospace;font-size:11.4px;line-height:15px;color:#f4f4f4">Command:</div>
<div class="t" style="left:512px;top:928px;font-family:'Liberation Mono',monospace;font-size:11.6px;line-height:15px;color:#f4f4f4">**** No System Variable Changed ****</div>
<div class="t" style="left:512px;top:948px;font-family:'Liberation Mono',monospace;font-size:11.4px;line-height:15px;color:#f4f4f4">Command:</div>
<!-- command line -->
<div class="a" style="left:450px;top:967px;width:1012px;height:25px;background:rgba(238,238,238,.82);border-radius:0 3px 3px 0;border-top:1px solid #9a9a9a"></div>
<div class="a" style="left:450px;top:967px;width:54px;height:25px;background:linear-gradient(#777,#5e5e5e);border-radius:2px 0 0 2px"></div>
<svg style="left:452px;top:968px" width="52" height="23">
 <path d="M3 4V20M6 4V20" stroke="#aaa" stroke-width="1.4" stroke-dasharray="1.4 1.4"/>
 <path d="M14 7L22 15M22 7L14 15" stroke="#f0f0f0" stroke-width="1.7"/>
 <path d="M31 7C33 5 36 6 37 8L44 15C45 16 45 17 44 18L43 19C42 20 41 20 40 19L33 12C30 12 29 10 30 8L32 10L34 9L33 7Z" fill="#eee"/>
</svg>
<div class="a" style="left:509px;top:972px;width:15px;height:14px;background:#e6e6e6;border:1px solid #aaa;border-radius:2px"></div>
<svg style="left:511px;top:975px" width="12" height="9"><path d="M1 1L5 4.5L1 8" fill="none" stroke="#666" stroke-width="1.1"/><path d="M6 8H11" stroke="#666" stroke-width="1.1"/></svg>
<svg style="left:527px;top:977px" width="7" height="5"><path d="M0 0H6L3 4Z" fill="#8a8a8a"/></svg>
<div class="t" style="left:540px;top:972px;font-family:'Liberation Mono',monospace;font-style:italic;font-size:11.5px;color:#9a9a9a">Type a command</div>
<svg style="left:1450px;top:975px" width="9" height="6"><path d="M0 5H8L4 0Z" fill="#333"/></svg>
<!-- STATUS BAR -->
<div class="a" id="status"></div>
<svg style="left:6px;top:993px" width="150" height="20">
 <path d="M9 0 C14 0 14 17 20 17 H62 C68 17 68 0 73 0Z" fill="#555"/>
 <path d="M67 0 C72 0 72 17 78 17 H101 C107 17 107 0 112 0Z" fill="#6a6a6a"/>
 <path d="M112 17 C117 17 117 3 124 3 H134 L134 17Z" fill="#4a4a4a"/>
</svg>
<div class="t" style="left:29px;top:995px;color:#d8d8d8;font-size:12.5px">Model</div>
<div class="t" style="left:86px;top:995px;color:#fafafa;font-weight:bold;font-size:12.5px">D1</div>
<svg style="left:123px;top:997px" width="11" height="11"><path d="M5.5 1V10M1 5.5H10" stroke="#c8c8c8" stroke-width="1.6"/></svg>
<div class="sg" style="left:1449px;width:42px"></div>
<div class="t" style="left:1453px;top:1000px;font-size:12.5px;color:#f4f4f4;transform-origin:0 0;transform:scaleX(.85)">PAPER</div>
<div class="sg" style="left:1492px;width:103px"></div>
<div class="a" style="left:1494px;top:996px;width:22px;height:22px;background:#6492c4"></div>
<svg style="left:1496px;top:998px" width="18" height="18"><path d="M1.5 1V16.5H16" fill="none" stroke="#fff" stroke-width="1.3"/><rect x="2.5" y="11" width="4" height="4.5" fill="none" stroke="#fff" stroke-width="1.1"/></svg>
<svg style="left:1520px;top:998px" width="18" height="17"><circle cx="7.5" cy="10" r="6" fill="none" stroke="#d0d0d0" stroke-width="1.2"/><path d="M6 10H17M8 10L15 2" stroke="#d0d0d0" stroke-width="1.2"/></svg>
<div class="dd" style="left:1544px;top:1005px;border-left-width:4px;border-right-width:4px;border-top-width:4.5px"></div>
<svg style="left:1560px;top:997px" width="15" height="18"><path d="M7 1V17" stroke="#4ac15a" stroke-width="1.1"/><path d="M1 2L13 14" stroke="#e05050" stroke-width="1.1"/><rect x="5.3" y="6.3" width="3" height="3" fill="#4b4b4b" stroke="#ddd" stroke-width="0.9"/></svg>
<div class="dd" style="left:1583px;top:1005px;border-left-width:4px;border-right-width:4px;border-top-width:4.5px"></div>
<div class="sg" style="left:1596px;width:64px"></div>
<svg style="left:1599px;top:999px" width="17" height="15"><path d="M0 13.5H16M0.5 13L12 2" fill="none" stroke="#d0d0d0" stroke-width="1.1"/><rect x="5" y="7" width="3" height="3" fill="#d0d0d0"/></svg>
<div class="a" style="left:1621px;top:996px;width:22px;height:22px;background:#6492c4"></div>
<svg style="left:1623px;top:998px" width="18" height="18"><rect x="4.5" y="4.5" width="12" height="12" fill="none" stroke="#fff" stroke-width="1.3"/><rect x="1" y="1" width="4" height="4" fill="#6492c4" stroke="#fff" stroke-width="1.1"/></svg>
<div class="dd" style="left:1647px;top:1005px;border-left-width:4px;border-right-width:4px;border-top-width:4.5px"></div>
<div class="sg" style="left:1661px;width:74px"></div>
<svg style="left:1665px;top:998px" width="18" height="17"><path d="M0.5 5V0.5H5M12 0.5H16.5V5M16.5 12V16.5H12M5 16.5H0.5V12" fill="none" stroke="#ddd" stroke-dasharray="2 1"/><rect x="6" y="7" width="7" height="7" fill="none" stroke="#ddd" stroke-width="1.2"/><path d="M2 2L6 6" stroke="#ddd"/></svg>
<svg style="left:1689px;top:998px" width="18" height="17"><path d="M8 1L12 13L8 10L4 13ZM3 16L8 11L13 16" fill="#d0d0d0"/><circle cx="14.5" cy="3.5" r="2.5" fill="none" stroke="#d0d0d0"/></svg>
<svg style="left:1713px;top:998px" width="18" height="17"><path d="M8 1L12 13L8 10L4 13ZM3 16L8 11L13 16" fill="#d0d0d0"/><path d="M14 0L12 4H15L13 8" fill="none" stroke="#d0d0d0"/></svg>
<div class="sg" style="left:1736px;width:40px"></div>
<svg style="left:1739px;top:998px" width="17" height="17"><circle cx="8.5" cy="8.5" r="5.5" fill="none" stroke="#d6d6d6" stroke-width="3.5"/><path d="M8.5 0V17M0 8.5H17M2.5 2.5L14.5 14.5M14.5 2.5L2.5 14.5" stroke="#d6d6d6" stroke-width="2.5"/><circle cx="8.5" cy="8.5" r="2.2" fill="#4b4b4b"/></svg>
<div class="dd" style="left:1764px;top:1005px;border-left-width:4px;border-right-width:4px;border-top-width:4.5px"></div>
<div class="sg" style="left:1777px;width:25px"></div>
<svg style="left:1781px;top:998px" width="17" height="17"><path d="M8.5 0.5V16.5M0.5 8.5H16.5" stroke="#e0e0e0" stroke-width="1.6"/></svg>
<div class="sg" style="left:1803px;width:26px"></div>
<svg style="left:1807px;top:998px" width="18" height="17"><rect x="0.5" y="0.5" width="6" height="6" fill="none" stroke="#ddd"/><circle cx="13" cy="7" r="3.3" fill="none" stroke="#ddd"/><path d="M6 11L9 16H3Z" fill="none" stroke="#ddd"/></svg>
<div class="sg" style="left:1830px;width:24px"></div>
<svg style="left:1833px;top:998px" width="18" height="17"><rect x="0" y="1" width="11" height="10" fill="#5ab4f0"/><path d="M5.5 1V11M0 6H11" stroke="#fff" stroke-width="1.1"/><circle cx="5.5" cy="6" r="1.6" fill="#5ab4f0" stroke="#fff"/><rect x="0" y="11" width="9" height="4" fill="#f2d430"/><path d="M10 13L12 15.5L16.5 10.5" fill="none" stroke="#4ac15a" stroke-width="1.2"/></svg>
<div class="sg" style="left:1855px;width:50px"></div>
<svg style="left:1857px;top:999px" width="46" height="16"><rect x="1.5" y="1.5" width="15" height="11" fill="none" stroke="#e0e0e0" stroke-width="1.2"/><path d="M4 10L7.5 6.5M11 7L14.5 3.5M4 10V8M4 10H6M14.5 3.5V5.5M14.5 3.5H12.5" fill="none" stroke="#e0e0e0"/><path d="M27 2.5H43M27 7.5H43M27 12.5H43" stroke="#f0f0f0" stroke-width="2"/></svg>

</body></html>
